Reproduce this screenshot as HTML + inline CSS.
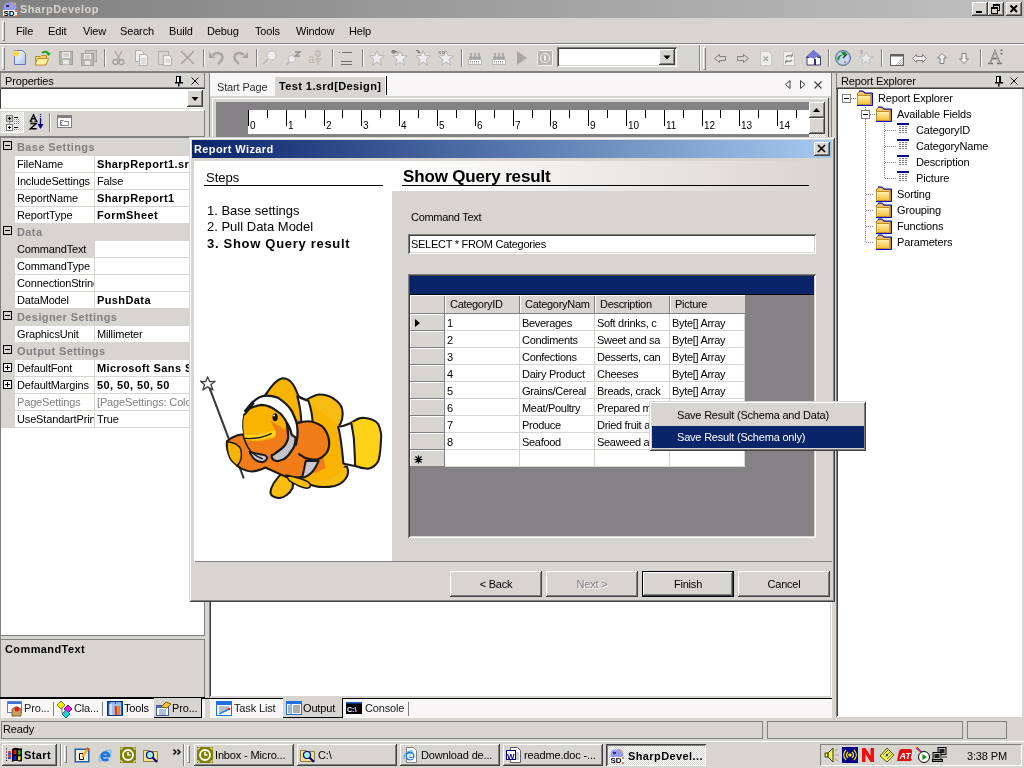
<!DOCTYPE html>
<html><head><meta charset="utf-8"><style>
html,body{margin:0;padding:0}
body{width:1024px;height:768px;overflow:hidden;position:relative;background:#D8D4D0;font-family:"Liberation Sans",sans-serif;}
div{position:absolute;box-sizing:border-box}
.tx{white-space:nowrap;font-family:"Liberation Sans",sans-serif;will-change:transform}
svg{position:absolute;overflow:visible}
</style></head><body>
<div style="left:0px;top:0px;width:1024px;height:18px;background:linear-gradient(to right,#808080,#C0C0C0)"></div>
<svg style="position:absolute;left:2px;top:1px" width="16" height="16" viewBox="0 0 16 16"><path d="M2 6 C1 3 4 1 7 2 C9 0 13 1 13 4 C15 5 15 8 13 9 L3 9 C1 9 1 7 2 6z" fill="#9898e8"/><path d="M4 4h3v2h-3z" fill="#303060"/><rect x="1" y="9" width="14" height="6" fill="#fff"/><text x="1.5" y="15" font-family="Liberation Sans" font-weight="bold" font-size="8" fill="#000">SD</text><circle cx="14" cy="10" r="1" fill="#e06020"/><circle cx="14" cy="15" r="1" fill="#e06020"/><circle cx="13" cy="3" r="1" fill="#f0c020"/></svg>
<div class="tx" style="left:20px;top:4px;font-size:11px;line-height:11px;font-weight:bold;color:#D8D4D0;letter-spacing:0.4px;">SharpDevelop</div>
<div style="left:972px;top:2px;width:16px;height:14px;background:#D8D4D0;box-shadow:inset -1px -1px #404040,inset 1px 1px #fff,inset -2px -2px #808080"></div>
<div style="left:988px;top:2px;width:16px;height:14px;background:#D8D4D0;box-shadow:inset -1px -1px #404040,inset 1px 1px #fff,inset -2px -2px #808080"></div>
<div style="left:1006px;top:2px;width:16px;height:14px;background:#D8D4D0;box-shadow:inset -1px -1px #404040,inset 1px 1px #fff,inset -2px -2px #808080"></div>
<svg style="position:absolute;left:972px;top:2px" width="16" height="14" viewBox="0 0 16 14"><rect x="4" y="9" width="6" height="2" fill="#000"/></svg>
<svg style="position:absolute;left:988px;top:2px" width="16" height="14" viewBox="0 0 16 14"><rect x="5.5" y="2.5" width="6" height="6" fill="none" stroke="#000"/><rect x="5" y="2" width="7" height="2" fill="#000"/><rect x="3.5" y="5.5" width="6" height="6" fill="#D8D4D0" stroke="#000"/><rect x="3" y="5" width="7" height="2" fill="#000"/></svg>
<svg style="position:absolute;left:1006px;top:2px" width="16" height="14" viewBox="0 0 16 14"><path d="M4.5 3.5 L11 10 M11 3.5 L4.5 10" stroke="#000" stroke-width="1.9"/></svg>
<div style="left:2px;top:21px;width:3px;height:20px;border-left:1px solid #fff;border-top:1px solid #fff;border-right:1px solid #808080;border-bottom:1px solid #808080;box-sizing:border-box"></div>
<div class="tx" style="left:16px;top:26px;font-size:11px;line-height:11px;color:#000;letter-spacing:-0.15px;">File</div>
<div class="tx" style="left:48px;top:26px;font-size:11px;line-height:11px;color:#000;letter-spacing:-0.15px;">Edit</div>
<div class="tx" style="left:83px;top:26px;font-size:11px;line-height:11px;color:#000;letter-spacing:-0.15px;">View</div>
<div class="tx" style="left:120px;top:26px;font-size:11px;line-height:11px;color:#000;letter-spacing:-0.15px;">Search</div>
<div class="tx" style="left:169px;top:26px;font-size:11px;line-height:11px;color:#000;letter-spacing:-0.15px;">Build</div>
<div class="tx" style="left:207px;top:26px;font-size:11px;line-height:11px;color:#000;letter-spacing:-0.15px;">Debug</div>
<div class="tx" style="left:255px;top:26px;font-size:11px;line-height:11px;color:#000;letter-spacing:-0.15px;">Tools</div>
<div class="tx" style="left:296px;top:26px;font-size:11px;line-height:11px;color:#000;letter-spacing:-0.15px;">Window</div>
<div class="tx" style="left:349px;top:26px;font-size:11px;line-height:11px;color:#000;letter-spacing:-0.15px;">Help</div>
<div style="left:0px;top:43px;width:1024px;height:1px;background:#808080"></div>
<div style="left:0px;top:44px;width:1024px;height:1px;background:#fff"></div>
<div style="left:2px;top:47px;width:3px;height:23px;border-left:1px solid #fff;border-top:1px solid #fff;border-right:1px solid #808080;border-bottom:1px solid #808080;box-sizing:border-box"></div>
<div style="left:703px;top:47px;width:3px;height:23px;border-left:1px solid #fff;border-top:1px solid #fff;border-right:1px solid #808080;border-bottom:1px solid #808080;box-sizing:border-box"></div>
<div style="left:104px;top:49px;width:1px;height:18px;background:#808080"></div>
<div style="left:105px;top:49px;width:1px;height:18px;background:#fff"></div>
<div style="left:203px;top:49px;width:1px;height:18px;background:#808080"></div>
<div style="left:204px;top:49px;width:1px;height:18px;background:#fff"></div>
<div style="left:256px;top:49px;width:1px;height:18px;background:#808080"></div>
<div style="left:257px;top:49px;width:1px;height:18px;background:#fff"></div>
<div style="left:332px;top:49px;width:1px;height:18px;background:#808080"></div>
<div style="left:333px;top:49px;width:1px;height:18px;background:#fff"></div>
<div style="left:362px;top:49px;width:1px;height:18px;background:#808080"></div>
<div style="left:363px;top:49px;width:1px;height:18px;background:#fff"></div>
<div style="left:461px;top:49px;width:1px;height:18px;background:#808080"></div>
<div style="left:462px;top:49px;width:1px;height:18px;background:#fff"></div>
<div style="left:828px;top:49px;width:1px;height:18px;background:#808080"></div>
<div style="left:829px;top:49px;width:1px;height:18px;background:#fff"></div>
<div style="left:881px;top:49px;width:1px;height:18px;background:#808080"></div>
<div style="left:882px;top:49px;width:1px;height:18px;background:#fff"></div>
<div style="left:980px;top:49px;width:1px;height:18px;background:#808080"></div>
<div style="left:981px;top:49px;width:1px;height:18px;background:#fff"></div>
<div style="left:699px;top:45px;width:1px;height:26px;background:#808080"></div>
<div style="left:700px;top:45px;width:1px;height:26px;background:#fff"></div>
<div style="left:557px;top:47px;width:120px;height:20px;background:#fff;box-shadow:inset 1px 1px #808080,inset -1px -1px #fff,inset 2px 2px #404040,inset -2px -2px #D8D4D0"></div>
<div style="left:659px;top:49px;width:16px;height:16px;background:#D8D4D0;box-shadow:inset -1px -1px #404040,inset 1px 1px #fff,inset -2px -2px #808080"></div>
<svg style="position:absolute;left:659px;top:49px" width="16" height="16" viewBox="0 0 16 16"><path d="M4.5 6.5 h7 l-3.5 4z" fill="#000"/></svg>
<div style="left:0px;top:71px;width:1024px;height:2px;background:#808080"></div>
<svg style="position:absolute;left:12px;top:50px" width="16" height="16" viewBox="0 0 16 16"><defs><linearGradient id="gnew" x1="0" y1="0" x2="1" y2="1"><stop offset="0" stop-color="#fff"/><stop offset="1" stop-color="#a8c8f0"/></linearGradient></defs><path d="M2.5 0.5h8l3 3v11h-11z" fill="url(#gnew)" stroke="#6a70c0"/><circle cx="4" cy="3.5" r="3" fill="#ffe060" opacity="0.9"/><path d="M4 0v7M0.5 3.5h7M1.5 1l5 5M6.5 1l-5 5" stroke="#f8d040" stroke-width="0.8"/></svg>
<svg style="position:absolute;left:35px;top:50px" width="16" height="16" viewBox="0 0 16 16"><path d="M0.5 6.5h5l1 -1h5v9h-11z" fill="#f0d070" stroke="#c09020"/><path d="M2.5 8.5h11l-2.5 6.5h-11z" fill="#fff0a0" stroke="#c09020"/><path d="M7 3 q4 -3 7 1" stroke="#20a020" stroke-width="2" fill="none"/><path d="M11 3h5l-2.5 3z" fill="#20a020"/></svg>
<svg style="position:absolute;left:58px;top:50px" width="16" height="16" viewBox="0 0 16 16"><rect x="1.5" y="1.5" width="13" height="13" fill="#B8B6B0" stroke="#a0a09a"/><rect x="4" y="2" width="8" height="6" fill="#F0F0EE"/><path d="M5 4h6M5 6h6" stroke="#b0b0aa"/><rect x="5" y="10" width="6" height="4.5" fill="#E8E8E4"/></svg>
<svg style="position:absolute;left:81px;top:50px" width="16" height="16" viewBox="0 0 16 16"><rect x="4.5" y="0.5" width="11" height="11" fill="#C8C6C0" stroke="#a8a6a0"/><rect x="0.5" y="3.5" width="12" height="12" fill="#B8B6B0" stroke="#a0a09a"/><rect x="3" y="4" width="7" height="5" fill="#F0F0EE"/><path d="M4 6h5M4 8h5" stroke="#b0b0aa"/><rect x="4" y="11" width="5" height="4" fill="#E8E8E4"/></svg>
<svg style="position:absolute;left:111px;top:50px" width="16" height="16" viewBox="0 0 16 16"><path d="M4 1 L9 10 M11 1 L6 10" stroke="#A8A6A0" stroke-width="1.3"/><circle cx="4.5" cy="12" r="2.5" fill="none" stroke="#A0A09A" stroke-width="1.3"/><circle cx="10.5" cy="12" r="2.5" fill="none" stroke="#A0A09A" stroke-width="1.3"/></svg>
<svg style="position:absolute;left:135px;top:50px" width="16" height="16" viewBox="0 0 16 16"><path d="M0.5 0.5h6l2 2v9h-8z" fill="#F0F0EE" stroke="#B0AEA8"/><path d="M4.5 4.5h6l2 2v9h-8z" fill="#F0F0EE" stroke="#B0AEA8"/><path d="M6 9h5M6 11h5M6 13h5" stroke="#C8C6C0"/></svg>
<svg style="position:absolute;left:158px;top:50px" width="16" height="16" viewBox="0 0 16 16"><rect x="0.5" y="1.5" width="10" height="13" fill="#D8D6D0" stroke="#B0AEA8"/><rect x="3" y="0.5" width="5" height="2" fill="#C0BEB8"/><path d="M5.5 5.5h6l2 2v8h-8z" fill="#F0F0EE" stroke="#B0AEA8"/><path d="M7 10h5M7 12h5" stroke="#C8C6C0"/></svg>
<svg style="position:absolute;left:180px;top:50px" width="16" height="16" viewBox="0 0 16 16"><path d="M1 1 L14 14 M14 1 L1 14" stroke="#A8A6A0" stroke-width="1.6"/></svg>
<svg style="position:absolute;left:209px;top:50px" width="16" height="16" viewBox="0 0 16 16"><path d="M4 5 q5 -4 9 0 q2 4 -4 9" stroke="#A8A6A0" stroke-width="2.5" fill="none"/><path d="M0 2 v6 h6z" fill="#A8A6A0"/></svg>
<svg style="position:absolute;left:233px;top:50px" width="16" height="16" viewBox="0 0 16 16"><path d="M11 5 q-5 -4 -9 0 q-2 4 4 9" stroke="#A8A6A0" stroke-width="2.5" fill="none"/><path d="M15 2 v6 h-6z" fill="#A8A6A0"/></svg>
<svg style="position:absolute;left:262px;top:50px" width="16" height="16" viewBox="0 0 16 16"><circle cx="9.5" cy="5.5" r="4.5" fill="#EEEEF0" stroke="#C0BEB8"/><path d="M6 9 L1 14" stroke="#B8B6B0" stroke-width="1.5"/></svg>
<svg style="position:absolute;left:286px;top:50px" width="16" height="16" viewBox="0 0 16 16"><circle cx="6" cy="9" r="3.5" fill="#EEEEF0" stroke="#C0BEB8"/><path d="M3.5 11.5 L0.5 15" stroke="#B8B6B0" stroke-width="1.3"/><path d="M9 2h5l-5 4h5" stroke="#909090" stroke-width="1.3" fill="none"/></svg>
<svg style="position:absolute;left:308px;top:50px" width="16" height="16" viewBox="0 0 16 16"><text x="0" y="13" font-family="Liberation Sans" font-size="12" fill="#B8B6B0">a</text><path d="M8 1h4v5h-4zM10 6v3M7 9h6M8 11h4M10 12v3" stroke="#B0AEA8" fill="none"/></svg>
<svg style="position:absolute;left:339px;top:50px" width="16" height="16" viewBox="0 0 16 16"><path d="M0 2.5h1M3 2.5h10M3 5.5h10M3 8.5h10M2 11.5h11M2 14.5h11" stroke="#707070"/><path d="M3 5.5h10M3 8.5h10" stroke="#D0D0D0"/></svg>
<svg style="position:absolute;left:369px;top:50px" width="16" height="16" viewBox="0 0 16 16"><path d="M8 0.5 L10 5.5 L15.5 6 L11 9.5 L12.5 15 L8 12 L3.5 15 L5 9.5 L0.5 6 L6 5.5z" fill="#EEEEF0" stroke="#B8B6B0"/></svg>
<svg style="position:absolute;left:392px;top:50px" width="16" height="16" viewBox="0 0 16 16"><path d="M8 0.5 L10 5.5 L15.5 6 L11 9.5 L12.5 15 L8 12 L3.5 15 L5 9.5 L0.5 6 L6 5.5z" fill="#EEEEF0" stroke="#B8B6B0"/><path d="M0 0.5h3v2.5h-3zM3 1.5h2l1 1.5" stroke="#808080" fill="#909090"/></svg>
<svg style="position:absolute;left:415px;top:50px" width="16" height="16" viewBox="0 0 16 16"><path d="M8 0.5 L10 5.5 L15.5 6 L11 9.5 L12.5 15 L8 12 L3.5 15 L5 9.5 L0.5 6 L6 5.5z" fill="#EEEEF0" stroke="#B8B6B0"/><path d="M1 0.5h2v2h2M3 0.5 L5 2.5" stroke="#707070" fill="none"/></svg>
<svg style="position:absolute;left:438px;top:50px" width="16" height="16" viewBox="0 0 16 16"><path d="M8 0.5 L10 5.5 L15.5 6 L11 9.5 L12.5 15 L8 12 L3.5 15 L5 9.5 L0.5 6 L6 5.5z" fill="#EEEEF0" stroke="#B8B6B0"/><path d="M0.5 1 L3 4 M3 1 L0.5 4 M4.5 1.5h2v2h-2z" stroke="#909090" fill="none"/></svg>
<svg style="position:absolute;left:467px;top:50px" width="16" height="16" viewBox="0 0 16 16"><rect x="1.5" y="9.5" width="13" height="5" fill="#fff" stroke="#B8B6B0"/><path d="M3 11.5h1M5 11.5h1M7 11.5h1M9 11.5h1M11 11.5h1M13 11.5h0M3 13h1M5 13h1M7 13h1M9 13h1M11 13h1" stroke="#909090"/><path d="M2 7 l2 2 2 -2M6 7 l2 2 2 -2M10 7 l2 2 2 -2M4 3v5M8 3v5M12 3v5" stroke="#A0A0A0" stroke-width="1.5" fill="none"/></svg>
<svg style="position:absolute;left:491px;top:50px" width="16" height="16" viewBox="0 0 16 16"><rect x="1.5" y="9.5" width="13" height="5" fill="#fff" stroke="#B8B6B0"/><path d="M3 11.5h1M5 11.5h1M7 11.5h1M9 11.5h1M11 11.5h1M13 11.5h0M3 13h1M5 13h1M7 13h1M9 13h1M11 13h1" stroke="#909090"/><path d="M2 7 l2 2 2 -2M6 7 l2 2 2 -2M10 7 l2 2 2 -2M4 3v5M8 3v5M12 3v5" stroke="#A0A0A0" stroke-width="1.5" fill="none"/></svg>
<svg style="position:absolute;left:514px;top:50px" width="16" height="16" viewBox="0 0 16 16"><path d="M3 1 L13 8 L3 15z" fill="#A8A6A0"/></svg>
<svg style="position:absolute;left:537px;top:50px" width="16" height="16" viewBox="0 0 16 16"><rect x="0.5" y="0.5" width="15" height="15" rx="1" fill="#B8B6B0" stroke="#F0F0F0"/><circle cx="8" cy="8" r="4.5" fill="none" stroke="#F0F0EE" stroke-width="1.2"/><rect x="7" y="5.5" width="2" height="5" fill="#F0F0EE"/></svg>
<svg style="position:absolute;left:714px;top:53px" width="13" height="11" viewBox="0 0 13 11"><path d="M5.5 1.5 L0.5 5.5 L5.5 9.5 V7.5 H11.5 V3.5 H5.5z" fill="none" stroke="#808080"/></svg>
<svg style="position:absolute;left:737px;top:53px" width="13" height="11" viewBox="0 0 13 11"><path d="M6.5 1.5 L11.5 5.5 L6.5 9.5 V7.5 H0.5 V3.5 H6.5z" fill="none" stroke="#808080"/></svg>
<svg style="position:absolute;left:760px;top:51px" width="13" height="16" viewBox="0 0 13 16"><path d="M0.5 0.5h8l3 3v11h-11z" fill="#EEEEEA" stroke="#C8C6C0"/><path d="M3.5 5.5 L8 10 M8 5.5 L3.5 10" stroke="#A8A6A0" stroke-width="1.5"/></svg>
<svg style="position:absolute;left:783px;top:51px" width="13" height="16" viewBox="0 0 13 16"><path d="M0.5 0.5h8l3 3v11h-11z" fill="#EEEEEA" stroke="#C8C6C0"/><path d="M3 6 q3 -3 6 0M9 9 q-3 3 -6 0" stroke="#909090" stroke-width="1.5" fill="none"/><path d="M7 5h3v-3zM5 10h-3v3z" fill="#909090"/></svg>
<svg style="position:absolute;left:806px;top:50px" width="16" height="16" viewBox="0 0 16 16"><path d="M7.5 0.5 L14.5 7 V15 H1 V7z" fill="#fff" stroke="#404060"/><path d="M0 7.5 L7.5 0.5 L15 7.5 L12 7.5 L7.5 3.5 L3 7.5z" fill="#7070d0" stroke="#404080"/><path d="M1 6 L7.5 0.5 L13 5 L8 9 z" fill="#7878d8"/><rect x="8" y="9" width="2" height="6" fill="#303070"/></svg>
<svg style="position:absolute;left:835px;top:50px" width="16" height="16" viewBox="0 0 16 16"><circle cx="8" cy="8" r="7.5" fill="#A0B8E0" stroke="#607090"/><circle cx="8" cy="8" r="6" fill="#C8D8F0"/><path d="M2 9 q2 -5 6 -4 l-2 -3 h5 l-1 5 l-1.5 -2 q-4 0 -4.5 6z" fill="#109020"/><path d="M8 8 L12 4" stroke="#303030" stroke-width="1.2"/><circle cx="10" cy="12" r="1" fill="#e06040"/></svg>
<svg style="position:absolute;left:858px;top:50px" width="16" height="16" viewBox="0 0 16 16"><path d="M8 1.5 L10 6 L15 6.5 L11 9.5 L12.5 14.5 L8 11.5 L3.5 14.5 L5 9.5 L1 6.5 L6 6z" fill="#E8E8EA" stroke="#C0C0C0"/><path d="M2 1h3M2 3h3" stroke="#A0A0A0"/></svg>
<svg style="position:absolute;left:890px;top:54px" width="15" height="13" viewBox="0 0 15 13"><rect x="0.5" y="0.5" width="13" height="11" fill="#fff" stroke="#606060"/><rect x="1" y="1" width="12" height="1.5" fill="#606060"/><path d="M6 11 L13 4 M8 11 L13 6 M10 11 L13 8 M12 11 L13 10" stroke="#B0B0B0"/></svg>
<svg style="position:absolute;left:912px;top:54px" width="16" height="10" viewBox="0 0 16 10"><path d="M4.5 0.5 L0.5 4.5 L4.5 8.5 V6.5 H10.5 V8.5 L14.5 4.5 L10.5 0.5 V2.5 H4.5z" fill="#F0F0F0" stroke="#808080"/></svg>
<svg style="position:absolute;left:937px;top:53px" width="11" height="12" viewBox="0 0 11 12"><path d="M5 0.5 L0.5 5 H3 V10.5 H7 V5 H9.5z" fill="#F0F0F0" stroke="#808080"/></svg>
<svg style="position:absolute;left:959px;top:53px" width="11" height="12" viewBox="0 0 11 12"><path d="M5 10.5 L0.5 6 H3 V0.5 H7 V6 H9.5z" fill="#F0F0F0" stroke="#808080"/></svg>
<svg style="position:absolute;left:987px;top:49px" width="17" height="17" viewBox="0 0 17 17"><path d="M1 14.5 h5 M10 14.5 h5 M3 14.5 L8 2 L13 14.5 M5.5 9.5 h5" stroke="#707070" stroke-width="1.6" fill="none"/><path d="M3 14.5 L8 2 L13 14.5" stroke="#e0e0e0" stroke-width="0.5" fill="none"/><path d="M13 2 l1.5 -2 l1.5 2zM13 4 l1.5 2 l1.5 -2z" fill="#707070"/></svg>
<div style="left:0px;top:73px;width:204px;height:14px;background:#D8D4D0"></div>
<div class="tx" style="left:5px;top:76px;font-size:11px;line-height:11px;color:#000;letter-spacing:-0.15px;">Properties</div>
<svg style="position:absolute;left:174px;top:76px" width="10" height="11" viewBox="0 0 10 11"><rect x="2.5" y="0.5" width="4" height="6" fill="#fff" stroke="#000"/><rect x="5" y="0" width="2" height="7" fill="#000"/><rect x="1" y="6" width="8" height="1.5" fill="#000"/><rect x="4" y="7.5" width="1.5" height="3" fill="#000"/></svg>
<svg style="position:absolute;left:191px;top:77px" width="8" height="8" viewBox="0 0 8 8"><path d="M0.5 0.5 L7.5 7.5 M7.5 0.5 L0.5 7.5" stroke="#000" stroke-width="1"/></svg>
<div style="left:204px;top:73px;width:1px;height:14px;background:#808080"></div>
<div style="left:0px;top:87px;width:205px;height:1px;background:#808080"></div>
<div style="left:0px;top:88px;width:205px;height:1px;background:#404040"></div>
<div style="left:0px;top:73px;width:1px;height:37px;background:#808080"></div>
<div style="left:0px;top:137px;width:1px;height:561px;background:#808080"></div>
<div style="left:1px;top:89px;width:203px;height:20px;background:#fff;border-right:1px solid #D8D4D0;border-bottom:1px solid #D8D4D0;box-sizing:border-box"></div>
<div style="left:0px;top:89px;width:1px;height:19px;background:#404040"></div>
<div style="left:187px;top:90px;width:16px;height:17px;background:#D8D4D0;box-shadow:inset -1px -1px #404040,inset 1px 1px #fff,inset -2px -2px #808080"></div>
<svg style="position:absolute;left:187px;top:90px" width="16" height="17" viewBox="0 0 16 17"><path d="M4.5 7 h7 l-3.5 4z" fill="#000"/></svg>
<div style="left:0px;top:109px;width:205px;height:2px;background:#fff"></div>
<div style="left:1px;top:112px;width:23px;height:21px;background:repeating-conic-gradient(#fff 0 25%,#D8D4D0 0 50%) 0 0/2px 2px;box-shadow:inset -1px -1px #fff"></div>
<svg style="position:absolute;left:5px;top:114px" width="18" height="18" viewBox="0 0 18 18"><rect x="1.5" y="1.5" width="6" height="6" fill="#C8C4C0" stroke="#808080"/><path d="M3 4.5h3M4.5 3v3" stroke="#000"/><rect x="1.5" y="10.5" width="6" height="6" fill="#fff" stroke="#808080"/><path d="M3 13.5h3M4.5 12v3" stroke="#000"/><path d="M4.5 7.5v3" stroke="#808080"/><path d="M9 3.5h4M9 13.5h4" stroke="#000"/><path d="M9 5.5h1M11 5.5h1M13 5.5h1M9 7.5h1M11 7.5h1M13 7.5h1M9 9.5h1M11 9.5h1M13 9.5h1M9 15.5h1M11 15.5h1M13 15.5h1" stroke="#808080"/></svg>
<svg style="position:absolute;left:29px;top:114px" width="16" height="18" viewBox="0 0 16 18"><path d="M1.5 7 L4.5 0.8 L7.5 7M3 4.8h3" stroke="#000" stroke-width="1.4" fill="none"/><path d="M0.5 7.3h3M5.5 7.3h3" stroke="#000" stroke-width="1.2"/><path d="M1.3 9.5h6L1.3 14.8h6.4" stroke="#000" stroke-width="1.4" fill="none"/><path d="M11.5 0v1M11.5 2v1M11.5 4v10" stroke="#000080" stroke-width="1.3"/><path d="M8.5 10 h6 l-3 5z" fill="#000080"/></svg>
<div style="left:49px;top:113px;width:1px;height:19px;background:#808080"></div>
<div style="left:50px;top:113px;width:1px;height:19px;background:#fff"></div>
<svg style="position:absolute;left:57px;top:115px" width="16" height="16" viewBox="0 0 16 16"><rect x="0.5" y="0.5" width="14" height="12" fill="#fff" stroke="#808080"/><rect x="1" y="1" width="13" height="2" fill="#808080"/><path d="M3.5 5.5h3l1 1h4v4h-8z" fill="none" stroke="#808080"/><path d="M4 7.5h1M4 9.5h1" stroke="#808080"/></svg>
<div style="left:0px;top:136px;width:205px;height:1px;background:#808080"></div>
<div style="left:1px;top:137px;width:1px;height:498px;background:#D8D4D0"></div>
<div style="left:1px;top:137px;width:203px;height:498px;background:#fff"></div>
<div style="left:0px;top:137px;width:205px;height:1px;background:#808080"></div>
<div style="left:1px;top:138px;width:203px;height:17px;background:#D8D4D0"></div>
<svg style="position:absolute;left:3px;top:141px" width="9" height="9" viewBox="0 0 9 9"><rect x="0.5" y="0.5" width="8" height="8" fill="none" stroke="#000"/><path d="M2 4.5h5" stroke="#000"/></svg>
<div class="tx" style="left:17px;top:142px;font-size:11px;line-height:11px;font-weight:bold;color:#808080;letter-spacing:0.4px;">Base Settings</div>
<div style="left:1px;top:155px;width:14px;height:17px;background:#D8D4D0"></div>
<div style="left:15px;top:155px;width:189px;height:1px;background:#D8D4D0"></div>
<div style="left:94px;top:155px;width:1px;height:17px;background:#D8D4D0"></div>
<div style="left:15px;top:156px;width:79px;height:16px;overflow:hidden">
<div class="tx" style="left:2px;top:3px;font-size:11px;line-height:11px;color:#000;letter-spacing:-0.15px;">FileName</div>
</div>
<div style="left:95px;top:156px;width:95px;height:16px;overflow:hidden">
<div class="tx" style="left:2px;top:3px;font-size:11px;line-height:11px;font-weight:bold;color:#000;letter-spacing:0.4px;">SharpReport1.srd</div>
</div>
<div style="left:1px;top:172px;width:14px;height:17px;background:#D8D4D0"></div>
<div style="left:15px;top:172px;width:189px;height:1px;background:#D8D4D0"></div>
<div style="left:94px;top:172px;width:1px;height:17px;background:#D8D4D0"></div>
<div style="left:15px;top:173px;width:79px;height:16px;overflow:hidden">
<div class="tx" style="left:2px;top:3px;font-size:11px;line-height:11px;color:#000;letter-spacing:-0.15px;">IncludeSettings</div>
</div>
<div style="left:95px;top:173px;width:95px;height:16px;overflow:hidden">
<div class="tx" style="left:2px;top:3px;font-size:11px;line-height:11px;color:#000;letter-spacing:-0.15px;">False</div>
</div>
<div style="left:1px;top:189px;width:14px;height:17px;background:#D8D4D0"></div>
<div style="left:15px;top:189px;width:189px;height:1px;background:#D8D4D0"></div>
<div style="left:94px;top:189px;width:1px;height:17px;background:#D8D4D0"></div>
<div style="left:15px;top:190px;width:79px;height:16px;overflow:hidden">
<div class="tx" style="left:2px;top:3px;font-size:11px;line-height:11px;color:#000;letter-spacing:-0.15px;">ReportName</div>
</div>
<div style="left:95px;top:190px;width:95px;height:16px;overflow:hidden">
<div class="tx" style="left:2px;top:3px;font-size:11px;line-height:11px;font-weight:bold;color:#000;letter-spacing:0.4px;">SharpReport1</div>
</div>
<div style="left:1px;top:206px;width:14px;height:17px;background:#D8D4D0"></div>
<div style="left:15px;top:206px;width:189px;height:1px;background:#D8D4D0"></div>
<div style="left:94px;top:206px;width:1px;height:17px;background:#D8D4D0"></div>
<div style="left:15px;top:207px;width:79px;height:16px;overflow:hidden">
<div class="tx" style="left:2px;top:3px;font-size:11px;line-height:11px;color:#000;letter-spacing:-0.15px;">ReportType</div>
</div>
<div style="left:95px;top:207px;width:95px;height:16px;overflow:hidden">
<div class="tx" style="left:2px;top:3px;font-size:11px;line-height:11px;font-weight:bold;color:#000;letter-spacing:0.4px;">FormSheet</div>
</div>
<div style="left:1px;top:223px;width:203px;height:17px;background:#D8D4D0"></div>
<svg style="position:absolute;left:3px;top:226px" width="9" height="9" viewBox="0 0 9 9"><rect x="0.5" y="0.5" width="8" height="8" fill="none" stroke="#000"/><path d="M2 4.5h5" stroke="#000"/></svg>
<div class="tx" style="left:17px;top:227px;font-size:11px;line-height:11px;font-weight:bold;color:#808080;letter-spacing:0.4px;">Data</div>
<div style="left:1px;top:240px;width:14px;height:17px;background:#D8D4D0"></div>
<div style="left:15px;top:240px;width:189px;height:1px;background:#D8D4D0"></div>
<div style="left:94px;top:240px;width:1px;height:17px;background:#D8D4D0"></div>
<div style="left:15px;top:241px;width:79px;height:16px;background:#D8D4D0"></div>
<div style="left:15px;top:241px;width:79px;height:16px;overflow:hidden">
<div class="tx" style="left:2px;top:3px;font-size:11px;line-height:11px;color:#000;letter-spacing:-0.15px;">CommandText</div>
</div>
<div style="left:95px;top:241px;width:95px;height:16px;overflow:hidden">
<div class="tx" style="left:2px;top:3px;font-size:11px;line-height:11px;color:#000;letter-spacing:-0.15px;"></div>
</div>
<div style="left:1px;top:257px;width:14px;height:17px;background:#D8D4D0"></div>
<div style="left:15px;top:257px;width:189px;height:1px;background:#D8D4D0"></div>
<div style="left:94px;top:257px;width:1px;height:17px;background:#D8D4D0"></div>
<div style="left:15px;top:258px;width:79px;height:16px;overflow:hidden">
<div class="tx" style="left:2px;top:3px;font-size:11px;line-height:11px;color:#000;letter-spacing:-0.15px;">CommandType</div>
</div>
<div style="left:95px;top:258px;width:95px;height:16px;overflow:hidden">
<div class="tx" style="left:2px;top:3px;font-size:11px;line-height:11px;color:#000;letter-spacing:-0.15px;"></div>
</div>
<div style="left:1px;top:274px;width:14px;height:17px;background:#D8D4D0"></div>
<div style="left:15px;top:274px;width:189px;height:1px;background:#D8D4D0"></div>
<div style="left:94px;top:274px;width:1px;height:17px;background:#D8D4D0"></div>
<div style="left:15px;top:275px;width:79px;height:16px;overflow:hidden">
<div class="tx" style="left:2px;top:3px;font-size:11px;line-height:11px;color:#000;letter-spacing:-0.15px;">ConnectionString</div>
</div>
<div style="left:95px;top:275px;width:95px;height:16px;overflow:hidden">
<div class="tx" style="left:2px;top:3px;font-size:11px;line-height:11px;color:#000;letter-spacing:-0.15px;"></div>
</div>
<div style="left:1px;top:291px;width:14px;height:17px;background:#D8D4D0"></div>
<div style="left:15px;top:291px;width:189px;height:1px;background:#D8D4D0"></div>
<div style="left:94px;top:291px;width:1px;height:17px;background:#D8D4D0"></div>
<div style="left:15px;top:292px;width:79px;height:16px;overflow:hidden">
<div class="tx" style="left:2px;top:3px;font-size:11px;line-height:11px;color:#000;letter-spacing:-0.15px;">DataModel</div>
</div>
<div style="left:95px;top:292px;width:95px;height:16px;overflow:hidden">
<div class="tx" style="left:2px;top:3px;font-size:11px;line-height:11px;font-weight:bold;color:#000;letter-spacing:0.4px;">PushData</div>
</div>
<div style="left:1px;top:308px;width:203px;height:17px;background:#D8D4D0"></div>
<svg style="position:absolute;left:3px;top:311px" width="9" height="9" viewBox="0 0 9 9"><rect x="0.5" y="0.5" width="8" height="8" fill="none" stroke="#000"/><path d="M2 4.5h5" stroke="#000"/></svg>
<div class="tx" style="left:17px;top:312px;font-size:11px;line-height:11px;font-weight:bold;color:#808080;letter-spacing:0.4px;">Designer Settings</div>
<div style="left:1px;top:325px;width:14px;height:17px;background:#D8D4D0"></div>
<div style="left:15px;top:325px;width:189px;height:1px;background:#D8D4D0"></div>
<div style="left:94px;top:325px;width:1px;height:17px;background:#D8D4D0"></div>
<div style="left:15px;top:326px;width:79px;height:16px;overflow:hidden">
<div class="tx" style="left:2px;top:3px;font-size:11px;line-height:11px;color:#000;letter-spacing:-0.15px;">GraphicsUnit</div>
</div>
<div style="left:95px;top:326px;width:95px;height:16px;overflow:hidden">
<div class="tx" style="left:2px;top:3px;font-size:11px;line-height:11px;color:#000;letter-spacing:-0.15px;">Millimeter</div>
</div>
<div style="left:1px;top:342px;width:203px;height:17px;background:#D8D4D0"></div>
<svg style="position:absolute;left:3px;top:345px" width="9" height="9" viewBox="0 0 9 9"><rect x="0.5" y="0.5" width="8" height="8" fill="none" stroke="#000"/><path d="M2 4.5h5" stroke="#000"/></svg>
<div class="tx" style="left:17px;top:346px;font-size:11px;line-height:11px;font-weight:bold;color:#808080;letter-spacing:0.4px;">Output Settings</div>
<div style="left:1px;top:359px;width:14px;height:17px;background:#D8D4D0"></div>
<div style="left:15px;top:359px;width:189px;height:1px;background:#D8D4D0"></div>
<div style="left:94px;top:359px;width:1px;height:17px;background:#D8D4D0"></div>
<svg style="position:absolute;left:3px;top:363px" width="9" height="9" viewBox="0 0 9 9"><rect x="0.5" y="0.5" width="8" height="8" fill="#fff" stroke="#000"/><path d="M2 4.5h5M4.5 2v5" stroke="#000"/></svg>
<div style="left:15px;top:360px;width:79px;height:16px;overflow:hidden">
<div class="tx" style="left:2px;top:3px;font-size:11px;line-height:11px;color:#000;letter-spacing:-0.15px;">DefaultFont</div>
</div>
<div style="left:95px;top:360px;width:95px;height:16px;overflow:hidden">
<div class="tx" style="left:2px;top:3px;font-size:11px;line-height:11px;font-weight:bold;color:#000;letter-spacing:0.4px;">Microsoft Sans Serif, 8,25pt</div>
</div>
<div style="left:1px;top:376px;width:14px;height:17px;background:#D8D4D0"></div>
<div style="left:15px;top:376px;width:189px;height:1px;background:#D8D4D0"></div>
<div style="left:94px;top:376px;width:1px;height:17px;background:#D8D4D0"></div>
<svg style="position:absolute;left:3px;top:380px" width="9" height="9" viewBox="0 0 9 9"><rect x="0.5" y="0.5" width="8" height="8" fill="#fff" stroke="#000"/><path d="M2 4.5h5M4.5 2v5" stroke="#000"/></svg>
<div style="left:15px;top:377px;width:79px;height:16px;overflow:hidden">
<div class="tx" style="left:2px;top:3px;font-size:11px;line-height:11px;color:#000;letter-spacing:-0.15px;">DefaultMargins</div>
</div>
<div style="left:95px;top:377px;width:95px;height:16px;overflow:hidden">
<div class="tx" style="left:2px;top:3px;font-size:11px;line-height:11px;font-weight:bold;color:#000;letter-spacing:0.4px;">50, 50, 50, 50</div>
</div>
<div style="left:1px;top:393px;width:14px;height:17px;background:#D8D4D0"></div>
<div style="left:15px;top:393px;width:189px;height:1px;background:#D8D4D0"></div>
<div style="left:94px;top:393px;width:1px;height:17px;background:#D8D4D0"></div>
<div style="left:15px;top:394px;width:79px;height:16px;overflow:hidden">
<div class="tx" style="left:2px;top:3px;font-size:11px;line-height:11px;color:#808080;letter-spacing:-0.15px;">PageSettings</div>
</div>
<div style="left:95px;top:394px;width:95px;height:16px;overflow:hidden">
<div class="tx" style="left:2px;top:3px;font-size:11px;line-height:11px;color:#808080;letter-spacing:-0.15px;">[PageSettings: Color=True]</div>
</div>
<div style="left:1px;top:410px;width:14px;height:17px;background:#D8D4D0"></div>
<div style="left:15px;top:410px;width:189px;height:1px;background:#D8D4D0"></div>
<div style="left:94px;top:410px;width:1px;height:17px;background:#D8D4D0"></div>
<div style="left:15px;top:411px;width:79px;height:16px;overflow:hidden">
<div class="tx" style="left:2px;top:3px;font-size:11px;line-height:11px;color:#000;letter-spacing:-0.15px;">UseStandartPrinter</div>
</div>
<div style="left:95px;top:411px;width:95px;height:16px;overflow:hidden">
<div class="tx" style="left:2px;top:3px;font-size:11px;line-height:11px;color:#000;letter-spacing:-0.15px;">True</div>
</div>
<div style="left:1px;top:427px;width:203px;height:1px;background:#D8D4D0"></div>
<div style="left:204px;top:110px;width:1px;height:525px;background:#808080"></div>
<div style="left:0px;top:635px;width:205px;height:1px;background:#808080"></div>
<div style="left:0px;top:639px;width:205px;height:1px;background:#808080"></div>
<div style="left:204px;top:639px;width:1px;height:59px;background:#808080"></div>
<div class="tx" style="left:5px;top:644px;font-size:11px;line-height:11px;font-weight:bold;color:#000;letter-spacing:0.4px;">CommandText</div>
<div style="left:0px;top:697px;width:205px;height:1px;background:#000"></div>
<div style="left:209px;top:71px;width:1px;height:627px;background:#808080"></div>
<div style="left:210px;top:73px;width:621px;height:23px;background:#F8F6F6"></div>
<div class="tx" style="left:217px;top:82px;font-size:11px;line-height:11px;color:#303030;letter-spacing:-0.15px;">Start Page</div>
<div style="left:275px;top:77px;width:110px;height:19px;background:#D8D4D0"></div>
<div class="tx" style="left:279px;top:81px;font-size:11px;line-height:11px;font-weight:bold;color:#000;letter-spacing:0.4px;">Test 1.srd[Design]</div>
<div style="left:386px;top:76px;width:1px;height:19px;background:#000"></div>
<svg style="position:absolute;left:785px;top:80px" width="6" height="10" viewBox="0 0 6 10"><path d="M5 0.5 L0.5 4.5 L5 8.5z" fill="none" stroke="#404040"/></svg>
<svg style="position:absolute;left:800px;top:80px" width="6" height="10" viewBox="0 0 6 10"><path d="M0.5 0.5 L5 4.5 L0.5 8.5z" fill="none" stroke="#404040"/></svg>
<svg style="position:absolute;left:814px;top:81px" width="8" height="8" viewBox="0 0 8 8"><path d="M0.5 0.5 L7.5 7.5 M7.5 0.5 L0.5 7.5" stroke="#404040" stroke-width="1.1"/></svg>
<div style="left:210px;top:96px;width:621px;height:505px;background:#D8D4D0"></div>
<div style="left:212px;top:98px;width:617px;height:1px;background:#fff"></div>
<div style="left:212px;top:98px;width:1px;height:503px;background:#fff"></div>
<div style="left:828px;top:98px;width:1px;height:503px;background:#404040"></div>
<div style="left:216px;top:102px;width:593px;height:35px;background:#848284"></div>
<div style="left:248px;top:110px;width:561px;height:24px;background:#fff"></div>
<div style="left:248px;top:110px;width:1px;height:16px;background:#000"></div>
<div class="tx" style="left:250px;top:121px;font-size:10px;line-height:10px;">0</div>
<div style="left:267px;top:110px;width:1px;height:8px;background:#000"></div>
<div style="left:286px;top:110px;width:1px;height:16px;background:#000"></div>
<div class="tx" style="left:288px;top:121px;font-size:10px;line-height:10px;">1</div>
<div style="left:305px;top:110px;width:1px;height:8px;background:#000"></div>
<div style="left:324px;top:110px;width:1px;height:16px;background:#000"></div>
<div class="tx" style="left:326px;top:121px;font-size:10px;line-height:10px;">2</div>
<div style="left:342px;top:110px;width:1px;height:8px;background:#000"></div>
<div style="left:361px;top:110px;width:1px;height:16px;background:#000"></div>
<div class="tx" style="left:363px;top:121px;font-size:10px;line-height:10px;">3</div>
<div style="left:380px;top:110px;width:1px;height:8px;background:#000"></div>
<div style="left:399px;top:110px;width:1px;height:16px;background:#000"></div>
<div class="tx" style="left:401px;top:121px;font-size:10px;line-height:10px;">4</div>
<div style="left:418px;top:110px;width:1px;height:8px;background:#000"></div>
<div style="left:437px;top:110px;width:1px;height:16px;background:#000"></div>
<div class="tx" style="left:439px;top:121px;font-size:10px;line-height:10px;">5</div>
<div style="left:456px;top:110px;width:1px;height:8px;background:#000"></div>
<div style="left:475px;top:110px;width:1px;height:16px;background:#000"></div>
<div class="tx" style="left:477px;top:121px;font-size:10px;line-height:10px;">6</div>
<div style="left:494px;top:110px;width:1px;height:8px;background:#000"></div>
<div style="left:513px;top:110px;width:1px;height:16px;background:#000"></div>
<div class="tx" style="left:515px;top:121px;font-size:10px;line-height:10px;">7</div>
<div style="left:532px;top:110px;width:1px;height:8px;background:#000"></div>
<div style="left:550px;top:110px;width:1px;height:16px;background:#000"></div>
<div class="tx" style="left:552px;top:121px;font-size:10px;line-height:10px;">8</div>
<div style="left:569px;top:110px;width:1px;height:8px;background:#000"></div>
<div style="left:588px;top:110px;width:1px;height:16px;background:#000"></div>
<div class="tx" style="left:590px;top:121px;font-size:10px;line-height:10px;">9</div>
<div style="left:607px;top:110px;width:1px;height:8px;background:#000"></div>
<div style="left:626px;top:110px;width:1px;height:16px;background:#000"></div>
<div class="tx" style="left:628px;top:121px;font-size:10px;line-height:10px;">10</div>
<div style="left:645px;top:110px;width:1px;height:8px;background:#000"></div>
<div style="left:664px;top:110px;width:1px;height:16px;background:#000"></div>
<div class="tx" style="left:666px;top:121px;font-size:10px;line-height:10px;">11</div>
<div style="left:683px;top:110px;width:1px;height:8px;background:#000"></div>
<div style="left:702px;top:110px;width:1px;height:16px;background:#000"></div>
<div class="tx" style="left:704px;top:121px;font-size:10px;line-height:10px;">12</div>
<div style="left:720px;top:110px;width:1px;height:8px;background:#000"></div>
<div style="left:739px;top:110px;width:1px;height:16px;background:#000"></div>
<div class="tx" style="left:741px;top:121px;font-size:10px;line-height:10px;">13</div>
<div style="left:758px;top:110px;width:1px;height:8px;background:#000"></div>
<div style="left:777px;top:110px;width:1px;height:16px;background:#000"></div>
<div class="tx" style="left:779px;top:121px;font-size:10px;line-height:10px;">14</div>
<div style="left:796px;top:110px;width:1px;height:8px;background:#000"></div>
<div style="left:809px;top:102px;width:16px;height:16px;background:#D8D4D0;box-shadow:inset -1px -1px #404040,inset 1px 1px #fff,inset -2px -2px #808080"></div>
<svg style="position:absolute;left:809px;top:102px" width="16" height="16" viewBox="0 0 16 16"><path d="M4 10 h7 l-3.5 -4z" fill="#000"/></svg>
<div style="left:809px;top:118px;width:16px;height:16px;background:#D8D4D0;box-shadow:inset -1px -1px #404040,inset 1px 1px #fff,inset -2px -2px #808080"></div>
<div style="left:809px;top:134px;width:16px;height:3px;background:repeating-conic-gradient(#fff 0 25%,#D8D4D0 0 50%) 0 0/2px 2px"></div>
<div style="left:210px;top:601px;width:620px;height:96px;background:#fff"></div>
<div style="left:209px;top:601px;width:1px;height:97px;background:#808080"></div>
<div style="left:210px;top:601px;width:1px;height:96px;background:#404040"></div>
<div style="left:830px;top:601px;width:1px;height:96px;background:#D8D4D0"></div>
<div style="left:831px;top:601px;width:1px;height:97px;background:#fff"></div>
<div style="left:210px;top:696px;width:621px;height:1px;background:#D8D4D0"></div>
<div style="left:0px;top:698px;width:832px;height:1px;background:#000"></div>
<div style="left:1px;top:699px;width:204px;height:19px;background:#F8F6F6"></div>
<div style="left:210px;top:699px;width:622px;height:19px;background:#F8F6F6"></div>
<div class="tx" style="left:24px;top:703px;font-size:11px;line-height:11px;color:#202020;letter-spacing:-0.15px;">Pro...</div>
<div style="left:53px;top:702px;width:1px;height:14px;background:#808080"></div>
<div class="tx" style="left:74px;top:703px;font-size:11px;line-height:11px;color:#202020;letter-spacing:-0.15px;">Cla...</div>
<div style="left:102px;top:702px;width:1px;height:14px;background:#808080"></div>
<div class="tx" style="left:124px;top:703px;font-size:11px;line-height:11px;color:#000;letter-spacing:-0.15px;">Tools</div>
<div style="left:154px;top:698px;width:48px;height:20px;background:#D8D4D0;border-right:1px solid #000;border-bottom:1px solid #000;box-sizing:border-box"></div>
<div class="tx" style="left:172px;top:703px;font-size:11px;line-height:11px;color:#000;letter-spacing:-0.15px;">Pro...</div>
<div class="tx" style="left:234px;top:703px;font-size:11px;line-height:11px;color:#202020;letter-spacing:-0.15px;">Task List</div>
<div style="left:283px;top:698px;width:60px;height:20px;background:#D8D4D0;border-right:1px solid #000;border-bottom:1px solid #000;box-sizing:border-box"></div>
<div class="tx" style="left:303px;top:703px;font-size:11px;line-height:11px;color:#000;letter-spacing:-0.15px;">Output</div>
<div class="tx" style="left:365px;top:703px;font-size:11px;line-height:11px;color:#202020;letter-spacing:-0.15px;">Console</div>
<div style="left:408px;top:702px;width:1px;height:14px;background:#808080"></div>
<svg style="position:absolute;left:7px;top:701px" width="16" height="16" viewBox="0 0 16 16"><rect x="0.5" y="0.5" width="14" height="11" fill="#fff" stroke="#6080c0"/><rect x="1" y="1" width="13" height="2" fill="#4070d0"/><path d="M5 8 L9 6 L14 8 L14 15 L5 15z" fill="#d0a060" stroke="#806030"/><circle cx="10" cy="8" r="2.5" fill="#e02020"/></svg>
<svg style="position:absolute;left:57px;top:701px" width="16" height="16" viewBox="0 0 16 16"><path d="M4 0 L8 4 L4 8 L0 4z" fill="#f0f000" stroke="#808000"/><path d="M11 4 L15 8 L11 12 L7 8z" fill="#e020d0" stroke="#800080"/><path d="M9 9 L13 13 L9 17 L5 13z" fill="#20d0e0" stroke="#008080"/><path d="M5 6v6h3" stroke="#808080" fill="none"/></svg>
<svg style="position:absolute;left:107px;top:701px" width="16" height="16" viewBox="0 0 16 16"><rect x="0.5" y="0.5" width="15" height="14" fill="#2060c0" stroke="#003090"/><rect x="2" y="3" width="12" height="11" fill="#a0c0f0"/><path d="M4 3v11" stroke="#e0e0e0" stroke-width="2"/><path d="M9 5v9" stroke="#e04010" stroke-width="2.5"/><path d="M12 5v9" stroke="#f08020" stroke-width="2"/><path d="M3 2h5M9 2h5" stroke="#fff"/></svg>
<svg style="position:absolute;left:156px;top:701px" width="16" height="16" viewBox="0 0 16 16"><rect x="0.5" y="4.5" width="12" height="10" fill="#fff" stroke="#4060a0"/><rect x="1" y="5" width="11" height="2" fill="#4070d0"/><path d="M3 9h7M3 11h7M3 13h7" stroke="#6080b0"/><path d="M5 6 L10 1 L15 3 L11 7z" fill="#f0c040" stroke="#806000"/></svg>
<svg style="position:absolute;left:216px;top:701px" width="16" height="16" viewBox="0 0 16 16"><rect x="0.5" y="0.5" width="15" height="14" fill="#fff" stroke="#2070e0"/><rect x="1" y="1" width="14" height="3" fill="#2070e0"/><path d="M3 6h10M3 8h10M3 10h8" stroke="#808080"/><path d="M3 13 L13 8" stroke="#2080f0" stroke-width="1.5"/><circle cx="13" cy="8" r="1.3" fill="#e02020"/></svg>
<svg style="position:absolute;left:286px;top:701px" width="16" height="16" viewBox="0 0 16 16"><rect x="0.5" y="0.5" width="15" height="13" fill="#fff" stroke="#2070e0"/><rect x="1" y="1" width="14" height="2" fill="#2070e0"/><path d="M5 3v10" stroke="#2070e0"/><path d="M2 5h2M2 7h2M2 9h2M2 11h2M7 5h7M7 7h7M7 9h7M7 11h7" stroke="#606060"/></svg>
<svg style="position:absolute;left:346px;top:702px" width="16" height="16" viewBox="0 0 16 16"><rect x="0" y="0" width="16" height="12" fill="#000"/><rect x="0" y="0" width="16" height="1.5" fill="#2060d0"/><text x="1" y="10" font-family="Liberation Sans" font-weight="bold" font-size="7" fill="#fff">C:\</text></svg>
<div style="left:831px;top:71px;width:1px;height:530px;background:#808080"></div>
<div style="left:836px;top:73px;width:1px;height:644px;background:#808080"></div>
<div style="left:837px;top:73px;width:187px;height:14px;background:#D8D4D0"></div>
<div class="tx" style="left:841px;top:76px;font-size:11px;line-height:11px;color:#000;letter-spacing:-0.15px;">Report Explorer</div>
<svg style="position:absolute;left:994px;top:76px" width="10" height="11" viewBox="0 0 10 11"><rect x="2.5" y="0.5" width="4" height="6" fill="#fff" stroke="#000"/><rect x="5" y="0" width="2" height="7" fill="#000"/><rect x="1" y="6" width="8" height="1.5" fill="#000"/><rect x="4" y="7.5" width="1.5" height="3" fill="#000"/></svg>
<svg style="position:absolute;left:1010px;top:77px" width="8" height="8" viewBox="0 0 8 8"><path d="M0.5 0.5 L7.5 7.5 M7.5 0.5 L0.5 7.5" stroke="#000" stroke-width="1"/></svg>
<div style="left:836px;top:87px;width:188px;height:1px;background:#808080"></div>
<div style="left:836px;top:88px;width:188px;height:1px;background:#404040"></div>
<div style="left:837px;top:89px;width:1px;height:627px;background:#404040"></div>
<div style="left:838px;top:89px;width:184px;height:627px;background:#fff"></div>
<div style="left:837px;top:716px;width:186px;height:1px;background:#fff"></div>
<div style="left:1022px;top:89px;width:1px;height:628px;background:#D8D4D0"></div>
<div style="left:865px;top:107px;width:1px;height:136px;background:repeating-linear-gradient(to bottom,#808080 0 1px,transparent 1px 2px)"></div>
<div style="left:884px;top:123px;width:1px;height:56px;background:repeating-linear-gradient(to bottom,#808080 0 1px,transparent 1px 2px)"></div>
<div style="left:851px;top:98px;width:6px;height:1px;background:repeating-linear-gradient(to right,#808080 0 1px,transparent 1px 2px)"></div>
<div style="left:842px;top:94px;width:9px;height:9px;background:#fff;border:1px solid #808080;box-sizing:border-box"></div>
<div style="left:844px;top:98px;width:5px;height:1px;background:#000"></div>
<svg style="position:absolute;left:857px;top:91px" width="16" height="15" viewBox="0 0 16 15"><defs><linearGradient id="fg" x1="0" y1="0" x2="0" y2="1"><stop offset="0" stop-color="#FFF4B0"/><stop offset="1" stop-color="#F0C040"/></linearGradient></defs><path d="M0.5 13.5 V2.5 L2 0.5 H6 L7.5 2.5 H14.5 V13.5z" fill="#F0C860" stroke="#A07010"/><rect x="0.5" y="4.5" width="14" height="9" fill="url(#fg)" stroke="#C09030"/><path d="M2 0 H6.3 L7.8 2 H15.5 V14.5 H0" stroke="#0000D0" fill="none"/><path d="M13.5 5v8" stroke="#D0A040"/></svg>
<div class="tx" style="left:878px;top:93px;font-size:11px;line-height:11px;color:#000;letter-spacing:-0.15px;">Report Explorer</div>
<div style="left:866px;top:114px;width:8px;height:1px;background:repeating-linear-gradient(to right,#808080 0 1px,transparent 1px 2px)"></div>
<div style="left:870px;top:114px;width:6px;height:1px;background:repeating-linear-gradient(to right,#808080 0 1px,transparent 1px 2px)"></div>
<div style="left:861px;top:110px;width:9px;height:9px;background:#fff;border:1px solid #808080;box-sizing:border-box"></div>
<div style="left:863px;top:114px;width:5px;height:1px;background:#000"></div>
<svg style="position:absolute;left:876px;top:107px" width="16" height="15" viewBox="0 0 16 15"><defs><linearGradient id="fg" x1="0" y1="0" x2="0" y2="1"><stop offset="0" stop-color="#FFF4B0"/><stop offset="1" stop-color="#F0C040"/></linearGradient></defs><path d="M0.5 13.5 V2.5 L2 0.5 H6 L7.5 2.5 H14.5 V13.5z" fill="#F0C860" stroke="#A07010"/><rect x="0.5" y="4.5" width="14" height="9" fill="url(#fg)" stroke="#C09030"/><path d="M2 0 H6.3 L7.8 2 H15.5 V14.5 H0" stroke="#0000D0" fill="none"/><path d="M13.5 5v8" stroke="#D0A040"/></svg>
<div class="tx" style="left:897px;top:109px;font-size:11px;line-height:11px;color:#000;letter-spacing:-0.15px;">Available Fields</div>
<div style="left:885px;top:130px;width:11px;height:1px;background:repeating-linear-gradient(to right,#808080 0 1px,transparent 1px 2px)"></div>
<svg style="position:absolute;left:896px;top:123px" width="16" height="12" viewBox="0 0 16 12"><rect x="1" y="0" width="12" height="2" fill="#000080"/><rect x="3" y="3" width="2" height="1" fill="#808080"/><rect x="6" y="3" width="2" height="1" fill="#808080"/><rect x="9" y="3" width="2" height="1" fill="#808080"/><rect x="3" y="5" width="2" height="1" fill="#808080"/><rect x="6" y="5" width="2" height="1" fill="#808080"/><rect x="9" y="5" width="2" height="1" fill="#808080"/><rect x="3" y="7" width="2" height="1" fill="#808080"/><rect x="6" y="7" width="2" height="1" fill="#808080"/><rect x="9" y="7" width="2" height="1" fill="#808080"/><rect x="3" y="9" width="2" height="1" fill="#808080"/><rect x="6" y="9" width="2" height="1" fill="#808080"/><rect x="9" y="9" width="2" height="1" fill="#808080"/></svg>
<div class="tx" style="left:916px;top:125px;font-size:11px;line-height:11px;color:#000;letter-spacing:-0.15px;">CategoryID</div>
<div style="left:885px;top:146px;width:11px;height:1px;background:repeating-linear-gradient(to right,#808080 0 1px,transparent 1px 2px)"></div>
<svg style="position:absolute;left:896px;top:139px" width="16" height="12" viewBox="0 0 16 12"><rect x="1" y="0" width="12" height="2" fill="#000080"/><rect x="3" y="3" width="2" height="1" fill="#808080"/><rect x="6" y="3" width="2" height="1" fill="#808080"/><rect x="9" y="3" width="2" height="1" fill="#808080"/><rect x="3" y="5" width="2" height="1" fill="#808080"/><rect x="6" y="5" width="2" height="1" fill="#808080"/><rect x="9" y="5" width="2" height="1" fill="#808080"/><rect x="3" y="7" width="2" height="1" fill="#808080"/><rect x="6" y="7" width="2" height="1" fill="#808080"/><rect x="9" y="7" width="2" height="1" fill="#808080"/><rect x="3" y="9" width="2" height="1" fill="#808080"/><rect x="6" y="9" width="2" height="1" fill="#808080"/><rect x="9" y="9" width="2" height="1" fill="#808080"/></svg>
<div class="tx" style="left:916px;top:141px;font-size:11px;line-height:11px;color:#000;letter-spacing:-0.15px;">CategoryName</div>
<div style="left:885px;top:162px;width:11px;height:1px;background:repeating-linear-gradient(to right,#808080 0 1px,transparent 1px 2px)"></div>
<svg style="position:absolute;left:896px;top:155px" width="16" height="12" viewBox="0 0 16 12"><rect x="1" y="0" width="12" height="2" fill="#000080"/><rect x="3" y="3" width="2" height="1" fill="#808080"/><rect x="6" y="3" width="2" height="1" fill="#808080"/><rect x="9" y="3" width="2" height="1" fill="#808080"/><rect x="3" y="5" width="2" height="1" fill="#808080"/><rect x="6" y="5" width="2" height="1" fill="#808080"/><rect x="9" y="5" width="2" height="1" fill="#808080"/><rect x="3" y="7" width="2" height="1" fill="#808080"/><rect x="6" y="7" width="2" height="1" fill="#808080"/><rect x="9" y="7" width="2" height="1" fill="#808080"/><rect x="3" y="9" width="2" height="1" fill="#808080"/><rect x="6" y="9" width="2" height="1" fill="#808080"/><rect x="9" y="9" width="2" height="1" fill="#808080"/></svg>
<div class="tx" style="left:916px;top:157px;font-size:11px;line-height:11px;color:#000;letter-spacing:-0.15px;">Description</div>
<div style="left:885px;top:178px;width:11px;height:1px;background:repeating-linear-gradient(to right,#808080 0 1px,transparent 1px 2px)"></div>
<svg style="position:absolute;left:896px;top:171px" width="16" height="12" viewBox="0 0 16 12"><rect x="1" y="0" width="12" height="2" fill="#000080"/><rect x="3" y="3" width="2" height="1" fill="#808080"/><rect x="6" y="3" width="2" height="1" fill="#808080"/><rect x="9" y="3" width="2" height="1" fill="#808080"/><rect x="3" y="5" width="2" height="1" fill="#808080"/><rect x="6" y="5" width="2" height="1" fill="#808080"/><rect x="9" y="5" width="2" height="1" fill="#808080"/><rect x="3" y="7" width="2" height="1" fill="#808080"/><rect x="6" y="7" width="2" height="1" fill="#808080"/><rect x="9" y="7" width="2" height="1" fill="#808080"/><rect x="3" y="9" width="2" height="1" fill="#808080"/><rect x="6" y="9" width="2" height="1" fill="#808080"/><rect x="9" y="9" width="2" height="1" fill="#808080"/></svg>
<div class="tx" style="left:916px;top:173px;font-size:11px;line-height:11px;color:#000;letter-spacing:-0.15px;">Picture</div>
<div style="left:866px;top:194px;width:8px;height:1px;background:repeating-linear-gradient(to right,#808080 0 1px,transparent 1px 2px)"></div>
<svg style="position:absolute;left:876px;top:187px" width="16" height="15" viewBox="0 0 16 15"><defs><linearGradient id="fg" x1="0" y1="0" x2="0" y2="1"><stop offset="0" stop-color="#FFF4B0"/><stop offset="1" stop-color="#F0C040"/></linearGradient></defs><path d="M0.5 13.5 V2.5 L2 0.5 H6 L7.5 2.5 H14.5 V13.5z" fill="#F0C860" stroke="#A07010"/><rect x="0.5" y="4.5" width="14" height="9" fill="url(#fg)" stroke="#C09030"/><path d="M2 0 H6.3 L7.8 2 H15.5 V14.5 H0" stroke="#0000D0" fill="none"/><path d="M13.5 5v8" stroke="#D0A040"/></svg>
<div class="tx" style="left:897px;top:189px;font-size:11px;line-height:11px;color:#000;letter-spacing:-0.15px;">Sorting</div>
<div style="left:866px;top:210px;width:8px;height:1px;background:repeating-linear-gradient(to right,#808080 0 1px,transparent 1px 2px)"></div>
<svg style="position:absolute;left:876px;top:203px" width="16" height="15" viewBox="0 0 16 15"><defs><linearGradient id="fg" x1="0" y1="0" x2="0" y2="1"><stop offset="0" stop-color="#FFF4B0"/><stop offset="1" stop-color="#F0C040"/></linearGradient></defs><path d="M0.5 13.5 V2.5 L2 0.5 H6 L7.5 2.5 H14.5 V13.5z" fill="#F0C860" stroke="#A07010"/><rect x="0.5" y="4.5" width="14" height="9" fill="url(#fg)" stroke="#C09030"/><path d="M2 0 H6.3 L7.8 2 H15.5 V14.5 H0" stroke="#0000D0" fill="none"/><path d="M13.5 5v8" stroke="#D0A040"/></svg>
<div class="tx" style="left:897px;top:205px;font-size:11px;line-height:11px;color:#000;letter-spacing:-0.15px;">Grouping</div>
<div style="left:866px;top:226px;width:8px;height:1px;background:repeating-linear-gradient(to right,#808080 0 1px,transparent 1px 2px)"></div>
<svg style="position:absolute;left:876px;top:219px" width="16" height="15" viewBox="0 0 16 15"><defs><linearGradient id="fg" x1="0" y1="0" x2="0" y2="1"><stop offset="0" stop-color="#FFF4B0"/><stop offset="1" stop-color="#F0C040"/></linearGradient></defs><path d="M0.5 13.5 V2.5 L2 0.5 H6 L7.5 2.5 H14.5 V13.5z" fill="#F0C860" stroke="#A07010"/><rect x="0.5" y="4.5" width="14" height="9" fill="url(#fg)" stroke="#C09030"/><path d="M2 0 H6.3 L7.8 2 H15.5 V14.5 H0" stroke="#0000D0" fill="none"/><path d="M13.5 5v8" stroke="#D0A040"/></svg>
<div class="tx" style="left:897px;top:221px;font-size:11px;line-height:11px;color:#000;letter-spacing:-0.15px;">Functions</div>
<div style="left:866px;top:242px;width:8px;height:1px;background:repeating-linear-gradient(to right,#808080 0 1px,transparent 1px 2px)"></div>
<svg style="position:absolute;left:876px;top:235px" width="16" height="15" viewBox="0 0 16 15"><defs><linearGradient id="fg" x1="0" y1="0" x2="0" y2="1"><stop offset="0" stop-color="#FFF4B0"/><stop offset="1" stop-color="#F0C040"/></linearGradient></defs><path d="M0.5 13.5 V2.5 L2 0.5 H6 L7.5 2.5 H14.5 V13.5z" fill="#F0C860" stroke="#A07010"/><rect x="0.5" y="4.5" width="14" height="9" fill="url(#fg)" stroke="#C09030"/><path d="M2 0 H6.3 L7.8 2 H15.5 V14.5 H0" stroke="#0000D0" fill="none"/><path d="M13.5 5v8" stroke="#D0A040"/></svg>
<div class="tx" style="left:897px;top:237px;font-size:11px;line-height:11px;color:#000;letter-spacing:-0.15px;">Parameters</div>
<div style="left:0px;top:718px;width:1024px;height:23px;background:#D8D4D0"></div>
<div style="left:1px;top:721px;width:762px;height:18px;border:1px solid #808080;box-sizing:border-box"></div>
<div style="left:767px;top:721px;width:196px;height:18px;border:1px solid #808080;box-sizing:border-box"></div>
<div style="left:967px;top:721px;width:40px;height:18px;border:1px solid #808080;box-sizing:border-box"></div>
<div class="tx" style="left:3px;top:724px;font-size:11px;line-height:11px;color:#000;letter-spacing:-0.15px;">Ready</div>
<div style="left:0px;top:740px;width:1024px;height:28px;background:#D8D4D0"></div>
<div style="left:0px;top:740px;width:1024px;height:1px;background:#D8D4D0"></div>
<div style="left:0px;top:741px;width:1024px;height:1px;background:#fff"></div>
<div style="left:2px;top:744px;width:55px;height:22px;background:#D8D4D0;box-shadow:inset -1px -1px #404040,inset 1px 1px #fff,inset -2px -2px #808080"></div>
<svg style="position:absolute;left:5px;top:747px" width="18" height="16" viewBox="0 0 18 16"><path d="M7 2 Q10 0 13 1 Q15 2 17 1 V14 Q15 15 13 14 Q10 13 7 15z" fill="#000"/><path d="M8.5 3.5 Q10 2.5 11.5 3 V7.5 Q10 7 8.5 8z" fill="#f01010"/><path d="M13 3 Q14 3.5 15.5 3 V7.5 Q14 8 13 7.5z" fill="#10c010"/><path d="M8.5 9 Q10 8.5 11.5 9 V13 Q10 12.5 8.5 13.5z" fill="#1020f0"/><path d="M13 9 Q14 9.5 15.5 9 V13 Q14 13.5 13 13z" fill="#f0e000"/><path d="M1.5 1.5v1M1.5 4.5v1M1.5 7.5v1M1.5 10.5v1M1.5 13v1" stroke="#000"/><path d="M3 5h3M3 9h3" stroke="#f01010" stroke-width="1.3"/><path d="M3 7h3M3 11h3" stroke="#1020f0" stroke-width="1.3"/></svg>
<div class="tx" style="left:24px;top:750px;font-size:11px;line-height:11px;font-weight:bold;color:#000;letter-spacing:0.4px;">Start</div>
<div style="left:60px;top:744px;width:1px;height:22px;background:#808080"></div>
<div style="left:61px;top:744px;width:1px;height:22px;background:#fff"></div>
<div style="left:64px;top:745px;width:3px;height:18px;border-left:1px solid #fff;border-top:1px solid #fff;border-right:1px solid #808080;border-bottom:1px solid #808080;box-sizing:border-box"></div>
<svg style="position:absolute;left:74px;top:747px" width="16" height="16" viewBox="0 0 16 16"><rect x="0.5" y="1.5" width="15" height="14" fill="#2060b0"/><rect x="2" y="3" width="12" height="11" fill="#f4ecd0"/><path d="M5.5 6.5h4v6h-4z" fill="#fff" stroke="#000"/><path d="M8 10 L14 2" stroke="#f0b030" stroke-width="2.5"/><path d="M13 1 L15 3" stroke="#e04020" stroke-width="2"/></svg>
<svg style="position:absolute;left:97px;top:747px" width="16" height="16" viewBox="0 0 16 16"><ellipse cx="8" cy="8.5" rx="7.5" ry="3.2" transform="rotate(-40 8 8.5)" fill="none" stroke="#70B8F0" stroke-width="1.2"/><path d="M4.8 9 H12.2 A3.8 3.8 0 1 0 11.2 12" fill="none" stroke="#1E78E0" stroke-width="2.6"/></svg>
<svg style="position:absolute;left:120px;top:747px" width="16" height="16" viewBox="0 0 16 16"><rect x="0" y="0" width="16" height="16" fill="#808000"/><circle cx="8" cy="8" r="5" fill="#808000" stroke="#fff" stroke-width="1.8"/><path d="M8 5v3h2.5" stroke="#fff" stroke-width="1.5" fill="none"/><path d="M1 1h2M1 1v2M15 1h-2M15 1v2M1 15h2M1 15v-2M15 15h-2M15 15v-2" stroke="#f0f0c0"/></svg>
<svg style="position:absolute;left:143px;top:747px" width="16" height="16" viewBox="0 0 16 16"><path d="M0.5 3.5h6l1 1h7v10h-14z" fill="#f0e090" stroke="#908040"/><circle cx="7" cy="8" r="3.5" fill="#a0f0f0" stroke="#000080" stroke-width="1.2"/><path d="M9.5 10.5 L14 15" stroke="#000080" stroke-width="2"/></svg>
<svg style="position:absolute;left:173px;top:749px" width="9" height="6" viewBox="0 0 9 6"><path d="M0.5 0.5 L3 3 L0.5 5.5 M4.5 0.5 L7 3 L4.5 5.5" stroke="#000" stroke-width="1.5" fill="none"/></svg>
<div style="left:183px;top:744px;width:1px;height:22px;background:#808080"></div>
<div style="left:184px;top:744px;width:1px;height:22px;background:#fff"></div>
<div style="left:187px;top:745px;width:3px;height:18px;border-left:1px solid #fff;border-top:1px solid #fff;border-right:1px solid #808080;border-bottom:1px solid #808080;box-sizing:border-box"></div>
<div style="left:194px;top:744px;width:100px;height:22px;background:#D8D4D0;box-shadow:inset -1px -1px #404040,inset 1px 1px #fff,inset -2px -2px #808080"></div>
<svg style="position:absolute;left:197px;top:747px" width="16" height="16" viewBox="0 0 16 16"><rect x="0" y="0" width="16" height="16" fill="#808000"/><circle cx="8" cy="8" r="5" fill="#808000" stroke="#fff" stroke-width="1.8"/><path d="M8 5v3h2.5" stroke="#fff" stroke-width="1.5" fill="none"/><path d="M1 1h2M1 1v2M15 1h-2M15 1v2M1 15h2M1 15v-2M15 15h-2M15 15v-2" stroke="#f0f0c0"/></svg>
<div class="tx" style="left:215px;top:750px;font-size:11px;line-height:11px;color:#000;letter-spacing:-0.15px;">Inbox - Micro...</div>
<div style="left:297px;top:744px;width:100px;height:22px;background:#D8D4D0;box-shadow:inset -1px -1px #404040,inset 1px 1px #fff,inset -2px -2px #808080"></div>
<svg style="position:absolute;left:300px;top:747px" width="16" height="16" viewBox="0 0 16 16"><path d="M0.5 3.5h6l1 1h7v10h-14z" fill="#f0e090" stroke="#908040"/><circle cx="7" cy="8" r="3.5" fill="#a0f0f0" stroke="#000080" stroke-width="1.2"/><path d="M9.5 10.5 L14 15" stroke="#000080" stroke-width="2"/></svg>
<div class="tx" style="left:318px;top:750px;font-size:11px;line-height:11px;color:#000;letter-spacing:-0.15px;">C:\</div>
<div style="left:400px;top:744px;width:100px;height:22px;background:#D8D4D0;box-shadow:inset -1px -1px #404040,inset 1px 1px #fff,inset -2px -2px #808080"></div>
<svg style="position:absolute;left:403px;top:747px" width="16" height="16" viewBox="0 0 16 16"><path d="M3.5 0.5h7l3 3v12h-10z" fill="#fff" stroke="#808080"/><circle cx="7" cy="9" r="4.5" fill="#2080e0"/><path d="M4 9 h6 M4.5 9 C4.5 6.5 9.5 6.5 9.5 9 M4.5 10 C5.5 12 8.5 12 10 11" stroke="#fff" stroke-width="1.3" fill="none"/><path d="M1 12 C0 8 4 3 10 4" stroke="#40a0f0" fill="none"/></svg>
<div class="tx" style="left:421px;top:750px;font-size:11px;line-height:11px;color:#000;letter-spacing:-0.15px;">Download de...</div>
<div style="left:503px;top:744px;width:100px;height:22px;background:#D8D4D0;box-shadow:inset -1px -1px #404040,inset 1px 1px #fff,inset -2px -2px #808080"></div>
<svg style="position:absolute;left:506px;top:747px" width="16" height="16" viewBox="0 0 16 16"><path d="M4.5 0.5h7l3 3v12h-10z" fill="#fff" stroke="#606060"/><path d="M7 6h6M7 8h6M7 10h6M7 12h6" stroke="#a0a0a0"/><rect x="0.5" y="3.5" width="9" height="9" fill="#fff" stroke="#000080"/><text x="1" y="11.5" font-family="Liberation Sans" font-weight="bold" font-size="8" fill="#000080">W</text></svg>
<div class="tx" style="left:524px;top:750px;font-size:11px;line-height:11px;color:#000;letter-spacing:-0.15px;">readme.doc -...</div>
<div style="left:606px;top:744px;width:100px;height:22px;background:repeating-conic-gradient(#fff 0 25%,#D8D4D0 0 50%) 0 0/2px 2px;box-shadow:inset 1px 1px #404040,inset -1px -1px #fff,inset 2px 2px #808080"></div>
<svg style="position:absolute;left:609px;top:748px" width="16" height="16" viewBox="0 0 16 16"><path d="M2 6 C1 3 4 1 7 2 C9 0 13 1 13 4 C15 5 15 8 13 9 L3 9 C1 9 1 7 2 6z" fill="#9898e8"/><path d="M4 4h3v2h-3z" fill="#303060"/><rect x="1" y="9" width="14" height="6" fill="#fff"/><text x="1.5" y="15" font-family="Liberation Sans" font-weight="bold" font-size="8" fill="#000">SD</text><circle cx="14" cy="10" r="1" fill="#e06020"/><circle cx="14" cy="15" r="1" fill="#e06020"/><circle cx="13" cy="3" r="1" fill="#f0c020"/></svg>
<div class="tx" style="left:628px;top:751px;font-size:11px;line-height:11px;font-weight:bold;color:#000;letter-spacing:0.4px;">SharpDevel...</div>
<div style="left:820px;top:744px;width:202px;height:22px;border-top:1px solid #808080;border-left:1px solid #808080;border-right:1px solid #fff;border-bottom:1px solid #fff;box-sizing:border-box"></div>
<svg style="position:absolute;left:824px;top:747px" width="16" height="16" viewBox="0 0 16 16"><path d="M1 6h3l5 -5v14l-5 -5h-3z" fill="#f0f060" stroke="#404000"/><path d="M4 6v4" stroke="#000"/><path d="M11 4 l3 -2 M11 8h4 M11 12 l3 2" stroke="#a0a0a0"/></svg>
<svg style="position:absolute;left:842px;top:747px" width="16" height="16" viewBox="0 0 16 16"><rect x="0" y="0" width="16" height="16" fill="#000080"/><path d="M4 3 C1 6 1 10 4 13 M12 3 C15 6 15 10 12 13 M6 5 C4 7 4 9 6 11 M10 5 C12 7 12 9 10 11" stroke="#f0e000" stroke-width="1.3" fill="none"/><circle cx="8" cy="8" r="1.8" fill="#f0e000"/></svg>
<svg style="position:absolute;left:862px;top:748px" width="16" height="16" viewBox="0 0 16 16"><path d="M0 14V0h3.5l5 8V0h3.5v14h-3.5l-5 -8v8z" fill="#f01010"/></svg>
<svg style="position:absolute;left:879px;top:747px" width="16" height="16" viewBox="0 0 16 16"><path d="M1 9 L8 1 L15 8 L8 15z" fill="#f0f060" stroke="#606000"/><path d="M4 8 L9 3 M6 10 L11 5 M8 12 L13 7" stroke="#808000"/><circle cx="8" cy="8" r="1.2" fill="#2040c0"/></svg>
<svg style="position:absolute;left:896px;top:748px" width="16" height="16" viewBox="0 0 16 16"><path d="M1 13 L3 3 Q4 1 6 1 H14 Q16 1 16 3 V11 Q16 13 14 13z" fill="#e01010"/><text x="3.5" y="11" font-family="Liberation Sans" font-weight="bold" font-style="italic" font-size="9" fill="#fff">ATi</text></svg>
<svg style="position:absolute;left:914px;top:746px" width="16" height="16" viewBox="0 0 16 16"><path d="M1 0 L7 7" stroke="#f0d000" stroke-width="1.5"/><path d="M2 2 L7 6" stroke="#d02080" stroke-width="1.5"/><path d="M3 1 L8 6" stroke="#4040c0" stroke-width="1"/><circle cx="10" cy="11" r="5.5" fill="#fff" stroke="#000"/><path d="M8.5 8 L13 11 L8.5 14z" fill="#109010"/></svg>
<svg style="position:absolute;left:932px;top:747px" width="16" height="16" viewBox="0 0 16 16"><rect x="6" y="0.5" width="8" height="7" fill="#c0c0c0" stroke="#000"/><rect x="7.5" y="2" width="5" height="4" fill="#202020"/><rect x="1" y="5.5" width="8" height="7" fill="#c0c0c0" stroke="#000"/><rect x="2.5" y="7" width="5" height="4" fill="#202020"/><rect x="0.5" y="12.5" width="10" height="2" fill="#808080" stroke="#000"/><rect x="8" y="9" width="7" height="2" fill="#808080"/></svg>
<div class="tx" style="left:967px;top:751px;font-size:11px;line-height:11px;color:#000;letter-spacing:-0.15px;">3:38 PM</div>
<div style="left:189px;top:137px;width:646px;height:465px;background:#D8D4D0;box-shadow:inset 1px 1px #D8D4D0,inset -1px -1px #404040,inset 2px 2px #fff,inset -2px -2px #808080"></div>
<div style="left:192px;top:140px;width:640px;height:18px;background:linear-gradient(to right,#0A246A,#A6CAF0)"></div>
<div class="tx" style="left:194px;top:144px;font-size:11px;line-height:11px;font-weight:bold;color:#fff;letter-spacing:0.4px;">Report Wizard</div>
<div style="left:814px;top:142px;width:16px;height:14px;background:#D8D4D0;box-shadow:inset -1px -1px #404040,inset 1px 1px #fff,inset -2px -2px #808080"></div>
<svg style="position:absolute;left:814px;top:142px" width="16" height="14" viewBox="0 0 16 14"><path d="M4 3 L11 10 M11 3 L4 10" stroke="#000" stroke-width="1.6"/></svg>
<div style="left:194px;top:161px;width:198px;height:401px;background:#fff"></div>
<div style="left:195px;top:561px;width:637px;height:1px;background:#808080"></div>
<div style="left:392px;top:161px;width:440px;height:30px;background:linear-gradient(to right,#fff,#D8D4D0)"></div>
<svg style="position:absolute;left:196px;top:370px" width="192" height="136" viewBox="0 0 1024 725">
<line x1="72" y1="95" x2="255" y2="578" stroke="#383838" stroke-width="11"/>
<g stroke="#1a1a1a" stroke-width="11" stroke-linejoin="round" stroke-linecap="round">
<path d="M828,282 C850,265 870,255 890,255 C930,258 960,270 973,290 C985,320 990,345 987,366 C985,420 980,460 973,484 C960,510 940,522 918,526 C890,525 865,518 849,512 Z" fill="#FFD21A"/>
<path d="M590,600 C650,560 760,510 805,515 C825,560 790,605 740,618 C690,628 630,625 590,600 Z" fill="#F8BC10"/>
<path d="M592,157 C620,140 640,130 661,130 C690,130 715,140 730,150 C760,170 775,190 779,206 C785,230 782,250 779,262 C775,280 765,295 758,303 L650,300 Z" fill="#F8BC10"/>
<path d="M365,140 C400,90 430,44 469,44 C512,48 532,100 547,142 L480,210 Z" fill="#F8B400"/>
<path d="M255,235 C300,190 340,150 380,122 C450,118 510,128 545,140 C565,150 580,160 595,165 L700,250 L770,300 L840,274 L850,500 L795,500 C780,560 700,600 590,600 L480,570 L370,520 L262,350 C250,320 245,280 255,235 Z" fill="#F8B400" stroke="none"/>
<path d="M758,303 C790,300 810,290 828,282 C835,320 840,350 842,366 C845,420 848,480 849,512 C830,510 805,502 786,498 C780,430 772,350 758,303 Z" fill="#fff"/>
<path d="M454,554 C500,570 525,590 515,629 C500,660 470,680 447,682 C420,684 395,670 397,650 C400,620 420,590 454,554 Z" fill="#F8BC10"/>
<path d="M165,380 C200,350 240,340 262,345 C330,300 420,250 500,250 C560,260 600,300 640,380 C680,450 690,500 690,522 C640,552 560,577 480,570 L370,520 C330,540 290,545 265,535 C230,525 205,500 195,470 C170,450 160,410 165,380 Z" fill="#F07D1A" stroke="none"/>
<path d="M600,560 C560,575 520,577 480,570 L370,520 C330,540 290,545 265,535 C230,525 205,500 195,470 C170,450 160,410 165,380 C200,350 240,340 262,345" fill="none"/>
<path d="M262,350 C250,320 248,280 258,238 M545,140 L595,165" fill="none"/>
<path d="M479,560 C530,570 580,585 600,598 C615,610 615,630 590,630 C560,628 520,605 497,590 Z" fill="#F8BC10" stroke-width="8"/>
<path d="M166,382 C185,386 200,388 211,394 C228,405 238,415 240,427 C243,445 243,460 240,473 C235,490 228,502 220,511 C205,500 190,488 182,473 C172,455 168,435 166,415 Z" fill="#F8B400" stroke-width="8"/>
<path d="M258,238 C300,200 360,178 420,198 C470,220 490,260 480,300 L470,320 C450,300 420,285 392,268 C420,300 430,340 420,360 C350,385 290,385 262,362 C250,320 248,280 258,238 Z" fill="#F8B400" stroke="none"/>
<path d="M255,344 C310,350 380,335 422,318 C432,340 425,352 411,356 C350,372 300,378 265,375 Z" fill="#FFD21A" stroke="none"/>
<path d="M262,365 C320,368 370,355 401,339" fill="none" stroke-width="7"/>
<path d="M300,172 C325,150 350,136 372,136 C400,136 420,141 436,147 C475,172 500,200 511,219 C530,260 540,290 540,302 C544,340 538,380 532,400 L505,344 C500,320 495,300 484,282 C470,250 450,230 432,219 C400,196 370,186 349,186 C320,189 290,202 262,218 Z" fill="#fff" stroke-width="12"/>
<path d="M484,282 C500,300 505,320 510,344 L532,361 C530,390 520,420 510,429 C495,455 480,468 472,473 C450,483 435,487 429,485 C410,480 400,470 404,454 C415,450 420,447 422,445 C440,430 460,420 472,404 C490,380 494,360 491,342 C490,320 488,300 484,282 Z" fill="#C4C4CC" stroke-width="12"/>
<path d="M540,140 C560,150 580,160 600,165 C612,200 622,260 622,292 L562,300 C562,240 552,180 540,140 Z" fill="#fff"/>
<path d="M543,282 C580,272 600,270 619,276 C650,285 670,295 682,310 C700,335 708,355 710,380 C712,410 705,430 696,442 C680,462 665,472 647,477 C620,480 600,476 585,470 C570,462 558,455 550,449 C560,400 555,330 543,282 Z" fill="#F07D1A" stroke="none"/>
<path d="M543,282 C580,272 600,270 619,276 C650,285 670,295 682,310 C700,335 708,355 710,380 C712,410 705,430 696,442 C680,462 665,472 647,477 C620,480 600,476 585,470 C570,462 558,455 550,449" fill="none" stroke-width="12"/>
<path d="M585,485 L654,485 C640,520 620,550 598,562 C585,570 570,575 566,573 C575,540 580,510 585,485 Z" fill="#C8C8D0" stroke-width="11"/>
<path d="M285,435 C320,448 350,450 366,454 C378,460 382,470 379,473 C372,485 365,490 354,492 C335,490 315,480 304,467 C295,455 288,445 285,435 Z" fill="#C8C8D0" stroke-width="10"/>
<path d="M258,238 C275,220 290,200 307,177" fill="none"/>
<path d="M369,138 C372,132 376,126 380,122" fill="none"/>
<path d="M249,344 C258,370 265,390 274,407 C285,425 295,438 303,444 C320,458 338,468 353,473" fill="none" stroke-width="8"/>
<ellipse cx="422" cy="252" rx="14" ry="21" fill="#111" stroke="none"/>
<circle cx="416" cy="242" r="5" fill="#fff" stroke="none"/>
</g>
<path d="M62,36 L73,62 L102,60 L79,78 L91,106 L62,90 L36,106 L46,78 L24,60 L52,62 Z" fill="#fff" stroke="#444" stroke-width="7" stroke-linejoin="round"/>
</svg>
<div class="tx" style="left:206px;top:171px;font-size:13px;line-height:13px;color:#000;letter-spacing:0px;">Steps</div>
<div style="left:204px;top:185px;width:179px;height:1px;background:#000"></div>
<div class="tx" style="left:207px;top:204px;font-size:13px;line-height:13px;color:#000;letter-spacing:0px;">1. Base settings</div>
<div class="tx" style="left:207px;top:220px;font-size:13px;line-height:13px;color:#000;letter-spacing:0px;">2. Pull Data Model</div>
<div class="tx" style="left:207px;top:237px;font-size:13px;line-height:13px;font-weight:bold;color:#000;letter-spacing:0.7px;">3. Show Query result</div>
<div class="tx" style="left:403px;top:168px;font-size:17px;line-height:17px;font-weight:bold;color:#000;letter-spacing:-0.16px;">Show Query result</div>
<div style="left:402px;top:185px;width:407px;height:1px;background:#000"></div>
<div class="tx" style="left:411px;top:212px;font-size:11px;line-height:11px;color:#000;letter-spacing:-0.3px;">Command Text</div>
<div style="left:408px;top:234px;width:408px;height:20px;background:#fff;box-shadow:inset 1px 1px #808080,inset -1px -1px #fff,inset 2px 2px #404040,inset -2px -2px #D8D4D0"></div>
<div class="tx" style="left:411px;top:239px;font-size:11px;line-height:11px;color:#000;letter-spacing:-0.28px;">SELECT * FROM Categories</div>
<div style="left:408px;top:274px;width:408px;height:264px;background:#848284;box-shadow:inset 1px 1px #808080,inset -1px -1px #fff,inset 2px 2px #404040,inset -2px -2px #D8D4D0"></div>
<div style="left:410px;top:276px;width:404px;height:18px;background:#0A246A"></div>
<div style="left:410px;top:294px;width:404px;height:1px;background:#000"></div>
<div style="left:410px;top:295px;width:335px;height:18px;background:#D8D4D0;box-shadow:inset 1px 1px #fff"></div>
<div style="left:444px;top:296px;width:1px;height:17px;background:#808080"></div>
<div style="left:445px;top:296px;width:1px;height:17px;background:#fff"></div>
<div class="tx" style="left:450px;top:299px;font-size:11px;line-height:11px;color:#000;letter-spacing:-0.3px;">CategoryID</div>
<div style="left:519px;top:296px;width:1px;height:17px;background:#808080"></div>
<div style="left:520px;top:296px;width:1px;height:17px;background:#fff"></div>
<div class="tx" style="left:525px;top:299px;font-size:11px;line-height:11px;color:#000;letter-spacing:-0.3px;">CategoryNam</div>
<div style="left:594px;top:296px;width:1px;height:17px;background:#808080"></div>
<div style="left:595px;top:296px;width:1px;height:17px;background:#fff"></div>
<div class="tx" style="left:600px;top:299px;font-size:11px;line-height:11px;color:#000;letter-spacing:-0.3px;">Description</div>
<div style="left:669px;top:296px;width:1px;height:17px;background:#808080"></div>
<div style="left:670px;top:296px;width:1px;height:17px;background:#fff"></div>
<div class="tx" style="left:675px;top:299px;font-size:11px;line-height:11px;color:#000;letter-spacing:-0.3px;">Picture</div>
<div style="left:410px;top:313px;width:335px;height:1px;background:#808080"></div>
<div style="left:410px;top:314px;width:34px;height:16px;background:#D8D4D0;box-shadow:inset 1px 1px #fff"></div>
<div style="left:410px;top:330px;width:35px;height:1px;background:#808080"></div>
<div style="left:444px;top:314px;width:1px;height:17px;background:#808080"></div>
<div style="left:445px;top:314px;width:300px;height:16px;background:#fff"></div>
<div style="left:445px;top:330px;width:300px;height:1px;background:#D8D4D0"></div>
<div style="left:519px;top:314px;width:1px;height:17px;background:#D8D4D0"></div>
<div style="left:594px;top:314px;width:1px;height:17px;background:#D8D4D0"></div>
<div style="left:669px;top:314px;width:1px;height:17px;background:#D8D4D0"></div>
<div style="left:744px;top:314px;width:1px;height:17px;background:#D8D4D0"></div>
<div style="left:445px;top:314px;width:74px;height:16px;overflow:hidden">
<div class="tx" style="left:2px;top:4px;font-size:11px;line-height:11px;color:#000;letter-spacing:-0.3px;">1</div>
</div>
<div style="left:520px;top:314px;width:74px;height:16px;overflow:hidden">
<div class="tx" style="left:2px;top:4px;font-size:11px;line-height:11px;color:#000;letter-spacing:-0.3px;">Beverages</div>
</div>
<div style="left:595px;top:314px;width:74px;height:16px;overflow:hidden">
<div class="tx" style="left:2px;top:4px;font-size:11px;line-height:11px;color:#000;letter-spacing:-0.3px;">Soft drinks, c</div>
</div>
<div style="left:670px;top:314px;width:74px;height:16px;overflow:hidden">
<div class="tx" style="left:2px;top:4px;font-size:11px;line-height:11px;color:#000;letter-spacing:-0.3px;">Byte[] Array</div>
</div>
<div style="left:410px;top:331px;width:34px;height:16px;background:#D8D4D0;box-shadow:inset 1px 1px #fff"></div>
<div style="left:410px;top:347px;width:35px;height:1px;background:#808080"></div>
<div style="left:444px;top:331px;width:1px;height:17px;background:#808080"></div>
<div style="left:445px;top:331px;width:300px;height:16px;background:#fff"></div>
<div style="left:445px;top:347px;width:300px;height:1px;background:#D8D4D0"></div>
<div style="left:519px;top:331px;width:1px;height:17px;background:#D8D4D0"></div>
<div style="left:594px;top:331px;width:1px;height:17px;background:#D8D4D0"></div>
<div style="left:669px;top:331px;width:1px;height:17px;background:#D8D4D0"></div>
<div style="left:744px;top:331px;width:1px;height:17px;background:#D8D4D0"></div>
<div style="left:445px;top:331px;width:74px;height:16px;overflow:hidden">
<div class="tx" style="left:2px;top:4px;font-size:11px;line-height:11px;color:#000;letter-spacing:-0.3px;">2</div>
</div>
<div style="left:520px;top:331px;width:74px;height:16px;overflow:hidden">
<div class="tx" style="left:2px;top:4px;font-size:11px;line-height:11px;color:#000;letter-spacing:-0.3px;">Condiments</div>
</div>
<div style="left:595px;top:331px;width:74px;height:16px;overflow:hidden">
<div class="tx" style="left:2px;top:4px;font-size:11px;line-height:11px;color:#000;letter-spacing:-0.3px;">Sweet and sa</div>
</div>
<div style="left:670px;top:331px;width:74px;height:16px;overflow:hidden">
<div class="tx" style="left:2px;top:4px;font-size:11px;line-height:11px;color:#000;letter-spacing:-0.3px;">Byte[] Array</div>
</div>
<div style="left:410px;top:348px;width:34px;height:16px;background:#D8D4D0;box-shadow:inset 1px 1px #fff"></div>
<div style="left:410px;top:364px;width:35px;height:1px;background:#808080"></div>
<div style="left:444px;top:348px;width:1px;height:17px;background:#808080"></div>
<div style="left:445px;top:348px;width:300px;height:16px;background:#fff"></div>
<div style="left:445px;top:364px;width:300px;height:1px;background:#D8D4D0"></div>
<div style="left:519px;top:348px;width:1px;height:17px;background:#D8D4D0"></div>
<div style="left:594px;top:348px;width:1px;height:17px;background:#D8D4D0"></div>
<div style="left:669px;top:348px;width:1px;height:17px;background:#D8D4D0"></div>
<div style="left:744px;top:348px;width:1px;height:17px;background:#D8D4D0"></div>
<div style="left:445px;top:348px;width:74px;height:16px;overflow:hidden">
<div class="tx" style="left:2px;top:4px;font-size:11px;line-height:11px;color:#000;letter-spacing:-0.3px;">3</div>
</div>
<div style="left:520px;top:348px;width:74px;height:16px;overflow:hidden">
<div class="tx" style="left:2px;top:4px;font-size:11px;line-height:11px;color:#000;letter-spacing:-0.3px;">Confections</div>
</div>
<div style="left:595px;top:348px;width:74px;height:16px;overflow:hidden">
<div class="tx" style="left:2px;top:4px;font-size:11px;line-height:11px;color:#000;letter-spacing:-0.3px;">Desserts, can</div>
</div>
<div style="left:670px;top:348px;width:74px;height:16px;overflow:hidden">
<div class="tx" style="left:2px;top:4px;font-size:11px;line-height:11px;color:#000;letter-spacing:-0.3px;">Byte[] Array</div>
</div>
<div style="left:410px;top:365px;width:34px;height:16px;background:#D8D4D0;box-shadow:inset 1px 1px #fff"></div>
<div style="left:410px;top:381px;width:35px;height:1px;background:#808080"></div>
<div style="left:444px;top:365px;width:1px;height:17px;background:#808080"></div>
<div style="left:445px;top:365px;width:300px;height:16px;background:#fff"></div>
<div style="left:445px;top:381px;width:300px;height:1px;background:#D8D4D0"></div>
<div style="left:519px;top:365px;width:1px;height:17px;background:#D8D4D0"></div>
<div style="left:594px;top:365px;width:1px;height:17px;background:#D8D4D0"></div>
<div style="left:669px;top:365px;width:1px;height:17px;background:#D8D4D0"></div>
<div style="left:744px;top:365px;width:1px;height:17px;background:#D8D4D0"></div>
<div style="left:445px;top:365px;width:74px;height:16px;overflow:hidden">
<div class="tx" style="left:2px;top:4px;font-size:11px;line-height:11px;color:#000;letter-spacing:-0.3px;">4</div>
</div>
<div style="left:520px;top:365px;width:74px;height:16px;overflow:hidden">
<div class="tx" style="left:2px;top:4px;font-size:11px;line-height:11px;color:#000;letter-spacing:-0.3px;">Dairy Product</div>
</div>
<div style="left:595px;top:365px;width:74px;height:16px;overflow:hidden">
<div class="tx" style="left:2px;top:4px;font-size:11px;line-height:11px;color:#000;letter-spacing:-0.3px;">Cheeses</div>
</div>
<div style="left:670px;top:365px;width:74px;height:16px;overflow:hidden">
<div class="tx" style="left:2px;top:4px;font-size:11px;line-height:11px;color:#000;letter-spacing:-0.3px;">Byte[] Array</div>
</div>
<div style="left:410px;top:382px;width:34px;height:16px;background:#D8D4D0;box-shadow:inset 1px 1px #fff"></div>
<div style="left:410px;top:398px;width:35px;height:1px;background:#808080"></div>
<div style="left:444px;top:382px;width:1px;height:17px;background:#808080"></div>
<div style="left:445px;top:382px;width:300px;height:16px;background:#fff"></div>
<div style="left:445px;top:398px;width:300px;height:1px;background:#D8D4D0"></div>
<div style="left:519px;top:382px;width:1px;height:17px;background:#D8D4D0"></div>
<div style="left:594px;top:382px;width:1px;height:17px;background:#D8D4D0"></div>
<div style="left:669px;top:382px;width:1px;height:17px;background:#D8D4D0"></div>
<div style="left:744px;top:382px;width:1px;height:17px;background:#D8D4D0"></div>
<div style="left:445px;top:382px;width:74px;height:16px;overflow:hidden">
<div class="tx" style="left:2px;top:4px;font-size:11px;line-height:11px;color:#000;letter-spacing:-0.3px;">5</div>
</div>
<div style="left:520px;top:382px;width:74px;height:16px;overflow:hidden">
<div class="tx" style="left:2px;top:4px;font-size:11px;line-height:11px;color:#000;letter-spacing:-0.3px;">Grains/Cereal</div>
</div>
<div style="left:595px;top:382px;width:74px;height:16px;overflow:hidden">
<div class="tx" style="left:2px;top:4px;font-size:11px;line-height:11px;color:#000;letter-spacing:-0.3px;">Breads, crack</div>
</div>
<div style="left:670px;top:382px;width:74px;height:16px;overflow:hidden">
<div class="tx" style="left:2px;top:4px;font-size:11px;line-height:11px;color:#000;letter-spacing:-0.3px;">Byte[] Array</div>
</div>
<div style="left:410px;top:399px;width:34px;height:16px;background:#D8D4D0;box-shadow:inset 1px 1px #fff"></div>
<div style="left:410px;top:415px;width:35px;height:1px;background:#808080"></div>
<div style="left:444px;top:399px;width:1px;height:17px;background:#808080"></div>
<div style="left:445px;top:399px;width:300px;height:16px;background:#fff"></div>
<div style="left:445px;top:415px;width:300px;height:1px;background:#D8D4D0"></div>
<div style="left:519px;top:399px;width:1px;height:17px;background:#D8D4D0"></div>
<div style="left:594px;top:399px;width:1px;height:17px;background:#D8D4D0"></div>
<div style="left:669px;top:399px;width:1px;height:17px;background:#D8D4D0"></div>
<div style="left:744px;top:399px;width:1px;height:17px;background:#D8D4D0"></div>
<div style="left:445px;top:399px;width:74px;height:16px;overflow:hidden">
<div class="tx" style="left:2px;top:4px;font-size:11px;line-height:11px;color:#000;letter-spacing:-0.3px;">6</div>
</div>
<div style="left:520px;top:399px;width:74px;height:16px;overflow:hidden">
<div class="tx" style="left:2px;top:4px;font-size:11px;line-height:11px;color:#000;letter-spacing:-0.3px;">Meat/Poultry</div>
</div>
<div style="left:595px;top:399px;width:74px;height:16px;overflow:hidden">
<div class="tx" style="left:2px;top:4px;font-size:11px;line-height:11px;color:#000;letter-spacing:-0.3px;">Prepared m</div>
</div>
<div style="left:670px;top:399px;width:74px;height:16px;overflow:hidden">
<div class="tx" style="left:2px;top:4px;font-size:11px;line-height:11px;color:#000;letter-spacing:-0.3px;">Byte[] Array</div>
</div>
<div style="left:410px;top:416px;width:34px;height:16px;background:#D8D4D0;box-shadow:inset 1px 1px #fff"></div>
<div style="left:410px;top:432px;width:35px;height:1px;background:#808080"></div>
<div style="left:444px;top:416px;width:1px;height:17px;background:#808080"></div>
<div style="left:445px;top:416px;width:300px;height:16px;background:#fff"></div>
<div style="left:445px;top:432px;width:300px;height:1px;background:#D8D4D0"></div>
<div style="left:519px;top:416px;width:1px;height:17px;background:#D8D4D0"></div>
<div style="left:594px;top:416px;width:1px;height:17px;background:#D8D4D0"></div>
<div style="left:669px;top:416px;width:1px;height:17px;background:#D8D4D0"></div>
<div style="left:744px;top:416px;width:1px;height:17px;background:#D8D4D0"></div>
<div style="left:445px;top:416px;width:74px;height:16px;overflow:hidden">
<div class="tx" style="left:2px;top:4px;font-size:11px;line-height:11px;color:#000;letter-spacing:-0.3px;">7</div>
</div>
<div style="left:520px;top:416px;width:74px;height:16px;overflow:hidden">
<div class="tx" style="left:2px;top:4px;font-size:11px;line-height:11px;color:#000;letter-spacing:-0.3px;">Produce</div>
</div>
<div style="left:595px;top:416px;width:74px;height:16px;overflow:hidden">
<div class="tx" style="left:2px;top:4px;font-size:11px;line-height:11px;color:#000;letter-spacing:-0.3px;">Dried fruit a</div>
</div>
<div style="left:670px;top:416px;width:74px;height:16px;overflow:hidden">
<div class="tx" style="left:2px;top:4px;font-size:11px;line-height:11px;color:#000;letter-spacing:-0.3px;">Byte[] Array</div>
</div>
<div style="left:410px;top:433px;width:34px;height:16px;background:#D8D4D0;box-shadow:inset 1px 1px #fff"></div>
<div style="left:410px;top:449px;width:35px;height:1px;background:#808080"></div>
<div style="left:444px;top:433px;width:1px;height:17px;background:#808080"></div>
<div style="left:445px;top:433px;width:300px;height:16px;background:#fff"></div>
<div style="left:445px;top:449px;width:300px;height:1px;background:#D8D4D0"></div>
<div style="left:519px;top:433px;width:1px;height:17px;background:#D8D4D0"></div>
<div style="left:594px;top:433px;width:1px;height:17px;background:#D8D4D0"></div>
<div style="left:669px;top:433px;width:1px;height:17px;background:#D8D4D0"></div>
<div style="left:744px;top:433px;width:1px;height:17px;background:#D8D4D0"></div>
<div style="left:445px;top:433px;width:74px;height:16px;overflow:hidden">
<div class="tx" style="left:2px;top:4px;font-size:11px;line-height:11px;color:#000;letter-spacing:-0.3px;">8</div>
</div>
<div style="left:520px;top:433px;width:74px;height:16px;overflow:hidden">
<div class="tx" style="left:2px;top:4px;font-size:11px;line-height:11px;color:#000;letter-spacing:-0.3px;">Seafood</div>
</div>
<div style="left:595px;top:433px;width:74px;height:16px;overflow:hidden">
<div class="tx" style="left:2px;top:4px;font-size:11px;line-height:11px;color:#000;letter-spacing:-0.3px;">Seaweed a</div>
</div>
<div style="left:670px;top:433px;width:74px;height:16px;overflow:hidden">
<div class="tx" style="left:2px;top:4px;font-size:11px;line-height:11px;color:#000;letter-spacing:-0.3px;">Byte[] Array</div>
</div>
<div style="left:410px;top:450px;width:34px;height:16px;background:#D8D4D0;box-shadow:inset 1px 1px #fff"></div>
<div style="left:410px;top:466px;width:35px;height:1px;background:#808080"></div>
<div style="left:444px;top:450px;width:1px;height:17px;background:#808080"></div>
<div style="left:445px;top:450px;width:300px;height:16px;background:#fff"></div>
<div style="left:445px;top:466px;width:300px;height:1px;background:#D8D4D0"></div>
<div style="left:519px;top:450px;width:1px;height:17px;background:#D8D4D0"></div>
<div style="left:594px;top:450px;width:1px;height:17px;background:#D8D4D0"></div>
<div style="left:669px;top:450px;width:1px;height:17px;background:#D8D4D0"></div>
<div style="left:744px;top:450px;width:1px;height:17px;background:#D8D4D0"></div>
<svg style="position:absolute;left:414px;top:318px" width="8" height="10" viewBox="0 0 8 10"><path d="M1 1 L6 5 L1 9z" fill="#000"/></svg>
<svg style="position:absolute;left:414px;top:455px" width="9" height="9" viewBox="0 0 9 9"><path d="M4.5 0.5v8M0.5 4.5h8M1.5 1.5l6 6M7.5 1.5l-6 6" stroke="#000" stroke-width="1.2"/></svg>
<div style="left:649px;top:401px;width:217px;height:50px;background:#D8D4D0;box-shadow:inset 1px 1px #D8D4D0,inset -1px -1px #404040,inset 2px 2px #fff,inset -2px -2px #808080"></div>
<div style="left:652px;top:426px;width:212px;height:22px;background:#0A246A"></div>
<div class="tx" style="left:677px;top:410px;font-size:11px;line-height:11px;color:#000;letter-spacing:-0.2px;">Save Result (Schema and Data)</div>
<div class="tx" style="left:677px;top:432px;font-size:11px;line-height:11px;color:#fff;letter-spacing:-0.2px;">Save Result (Schema only)</div>
<div style="left:450px;top:571px;width:92px;height:26px;background:#D8D4D0;box-shadow:inset -1px -1px #404040,inset 1px 1px #fff,inset -2px -2px #808080"></div>
<div class="tx" style="left:450px;top:579px;width:92px;text-align:center;font-size:11px;line-height:11px;color:#000;letter-spacing:-0.2px;">&lt; Back</div>
<div style="left:546px;top:571px;width:92px;height:26px;background:#D8D4D0;box-shadow:inset -1px -1px #404040,inset 1px 1px #fff,inset -2px -2px #808080"></div>
<div class="tx" style="left:546px;top:579px;width:92px;text-align:center;font-size:11px;line-height:11px;color:#808080;letter-spacing:-0.2px;text-shadow:1px 1px #fff;">Next &gt;</div>
<div style="left:642px;top:571px;width:92px;height:26px;background:#D8D4D0;box-shadow:inset 1px 1px #000,inset -1px -1px #000,inset -2px -2px #404040,inset 2px 2px #fff,inset -3px -3px #808080"></div>
<div class="tx" style="left:642px;top:579px;width:92px;text-align:center;font-size:11px;line-height:11px;color:#000;letter-spacing:-0.2px;">Finish</div>
<div style="left:738px;top:571px;width:92px;height:26px;background:#D8D4D0;box-shadow:inset -1px -1px #404040,inset 1px 1px #fff,inset -2px -2px #808080"></div>
<div class="tx" style="left:738px;top:579px;width:92px;text-align:center;font-size:11px;line-height:11px;color:#000;letter-spacing:-0.2px;">Cancel</div>
</body></html>
